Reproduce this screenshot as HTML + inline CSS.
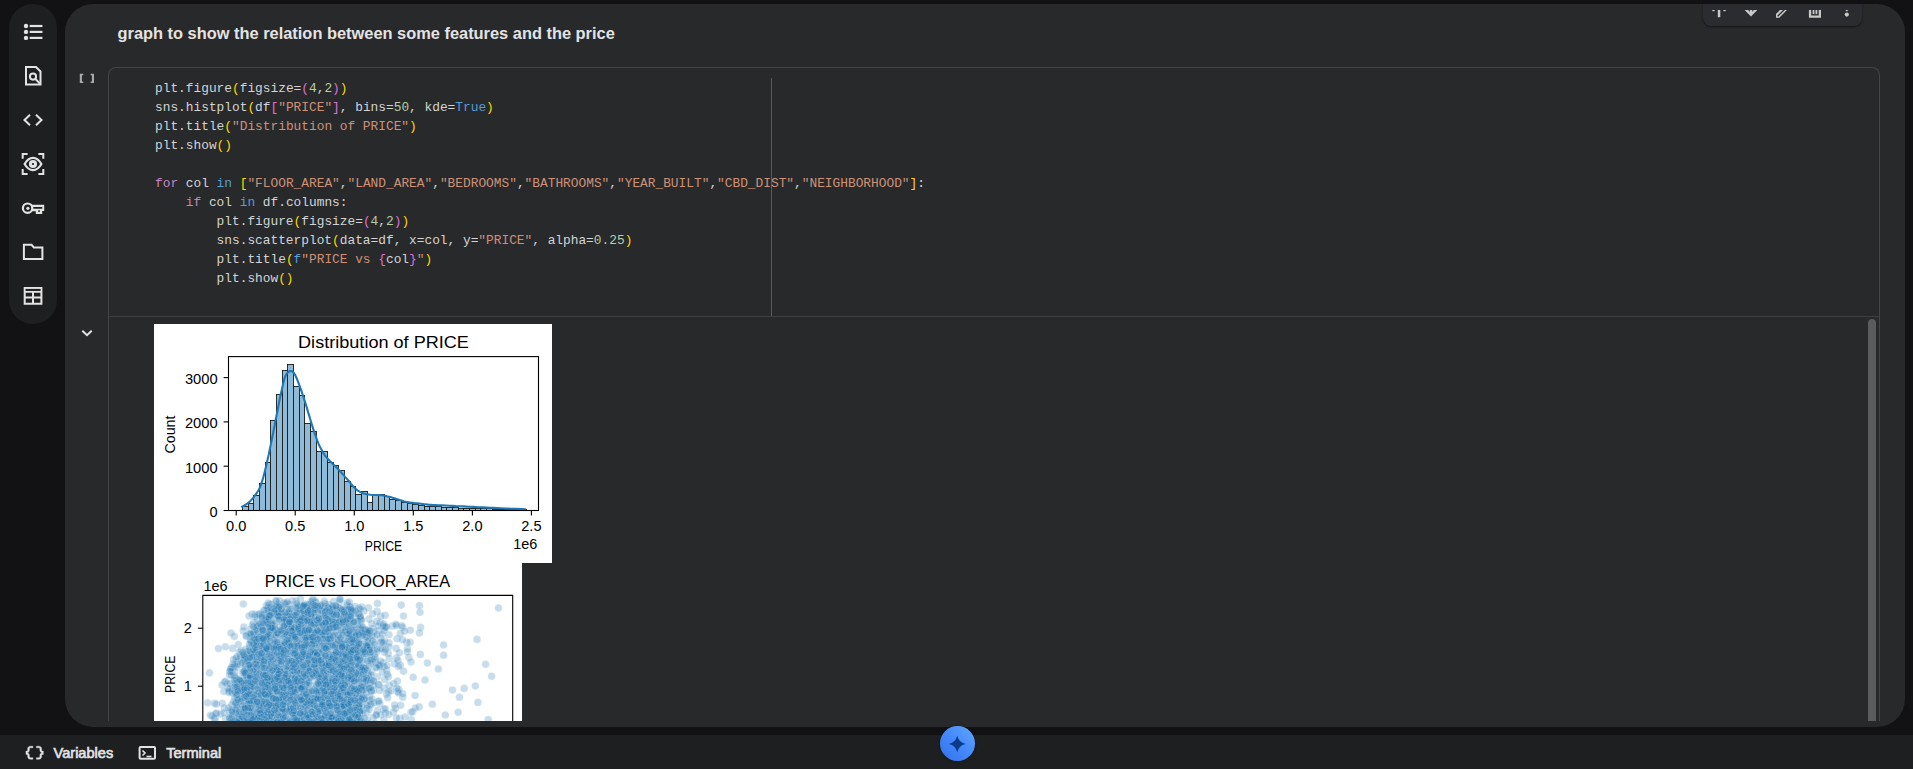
<!DOCTYPE html>
<html><head><meta charset="utf-8">
<style>
html,body{margin:0;padding:0}
body{width:1913px;height:769px;background:#121214;position:relative;overflow:hidden;font-family:"Liberation Sans",sans-serif}
.abs{position:absolute}
#side{left:9px;top:4px;width:48px;height:320px;border-radius:24px;background:#1e1f20}
#panel{left:65px;top:4px;width:1840px;height:723px;border-radius:28px;background:#28292b;overflow:hidden}
#title{left:117.5px;top:20.7px;font-weight:bold;font-size:16.4px;color:#e3e3e3;white-space:nowrap;line-height:24px}
#code{left:155px;top:79px;font-family:"Liberation Mono",monospace;font-size:12.84px;line-height:19px;color:#d4d4d4;white-space:pre}
.ln{height:19px}
.d{color:#d4d4d4} .k{color:#c586c0} .b{color:#569cd6} .s{color:#ce9178} .n{color:#b5cea8} .y{color:#ffd700} .p{color:#da70d6}
#status{left:0;top:735px;width:1913px;height:34px;background:#1e1f20}
.st{color:#e3e3e3;font-size:14.6px;white-space:nowrap;line-height:16px;-webkit-text-stroke:0.65px #e3e3e3}
</style></head><body>
<div id="side" class="abs">
<svg width="48" height="320" viewBox="9 4 48 320" style="position:absolute;left:0;top:0" fill="none" stroke="#e3e3e3" stroke-width="2">
 <g fill="#e3e3e3" stroke="none"><circle cx="26" cy="26" r="2.2"/><circle cx="26" cy="31.9" r="2.2"/><circle cx="26" cy="37.9" r="2.2"/>
 <rect x="29.7" y="24.9" width="12.7" height="2.2"/><rect x="29.7" y="30.8" width="12.7" height="2.2"/><rect x="29.7" y="36.8" width="12.7" height="2.2"/></g>
 <path d="M26,67 H36 L40.5,71.5 V84.6 H26 Z"/><circle cx="33" cy="76.6" r="3.1"/><path d="M35.2,78.8 L40,83.6"/>
 <path d="M30,114.8 L24.5,120 L30,125.2 M36,114.8 L41.5,120 L36,125.2"/>
 <path d="M22.7,158.8 V153.9 H27.6 M38.4,153.9 H43.3 V158.8 M22.7,169 V173.9 H27.6 M38.4,173.9 H43.3 V169"/>
 <path d="M24.6,164 C27.5,158.9 30.2,157.9 33,157.9 C35.8,157.9 38.5,158.9 41.4,164 C38.5,169.1 35.8,170.1 33,170.1 C30.2,170.1 27.5,169.1 24.6,164 Z" stroke-width="2.2" stroke-linejoin="round"/><circle cx="33" cy="164" r="2.6" stroke-width="3"/>
 <circle cx="27.6" cy="208.2" r="4.7" stroke-width="2.2"/><circle cx="27.9" cy="208.3" r="1.6" fill="#e3e3e3" stroke="none"/>
 <path fill="#e3e3e3" stroke="none" fill-rule="evenodd" d="M31.6,204.8 H44.2 V211.1 H42.2 V213.9 H35.8 V211.2 H31.6 Z M32.4,206.9 H42.3 V208.7 H32.4 Z M38.3,210.3 H39.8 V212 H38.3 Z"/>
 <path d="M23.9,244.8 H31.6 L33.8,247.4 H42.4 V259 H23.9 Z"/>
 <path d="M24.7,287.9 H41.4 V303.8 H24.7 Z M24.7,291.8 H41.4 M24.7,297.6 H41.4 M33,291.8 V303.8"/>
 <rect x="25.7" y="288.9" width="14.7" height="1.9" fill="#1e1f20" stroke="none"/>
</svg>
</div>
<div id="panel" class="abs"></div>
<div id="title" class="abs">graph to show the relation between some features and the price</div>
<!-- toolbar -->
<div class="abs" style="left:1703px;top:4px;width:159px;height:22px;border-radius:0 0 8px 8px;background:#2b2c2f;box-shadow:0 1px 2px rgba(0,0,0,.5)"></div>
<svg class="abs" style="left:1703px;top:0" width="160" height="26" viewBox="1703 0 160 26">
 <defs><clipPath id="tbc"><rect x="1703" y="9.9" width="160" height="20"/></clipPath></defs>
 <g clip-path="url(#tbc)" fill="#c8c8c8">
  <rect x="1717.8" y="8" width="2.5" height="9.2"/>
  <rect x="1712.3" y="8" width="2.3" height="3.2"/><rect x="1723.4" y="8" width="2.3" height="3.2"/>
  <path d="M1745,8.6 L1751,14.8 L1757,8.6" fill="none" stroke="#c8c8c8" stroke-width="2.5"/><rect x="1749.8" y="8" width="2.5" height="6"/>
  <path d="M1776,13.9 L1781.6,8.5 H1788.4 L1779.3,17.8 H1776 Z"/><path d="M1777.6,16.2 L1785.6,8.4" stroke="#2b2c2f" stroke-width="1.3"/>
  <path d="M1808.9,8 H1811.2 V15.5 H1818.7 V8 H1821 V17.8 H1808.9 Z"/><rect x="1812.6" y="8" width="1.8" height="6.1"/><rect x="1815.5" y="8" width="1.8" height="6.1"/>
  <circle cx="1846.8" cy="14.6" r="2.1"/><path d="M1844.8,9.6 H1848.8 L1846.8,11.4 Z"/>
 </g>
</svg>
<!-- cell gutter -->
<svg class="abs" style="left:70px;top:65px" width="30" height="25" viewBox="70 65 30 25" fill="#a9aaab"><path d="M79.8,73.8 H83.3 V75.3 H81.9 V81.6 H83.3 V83.1 H79.8 Z"/><path d="M94,73.8 H90.6 V75.3 H91.9 V81.6 H90.6 V83.1 H94 Z"/></svg>
<svg class="abs" style="left:80px;top:327.8px" width="14" height="10" viewBox="0 0 14 10"><path d="M2.3,2.8 L7,7.2 L11.7,2.8" fill="none" stroke="#e3e3e3" stroke-width="2"/></svg>
<!-- editor -->
<div class="abs" style="left:108px;top:67px;width:1772px;height:654px;border:1px solid #454546;border-bottom:none;border-radius:8px 8px 0 0;box-sizing:border-box"></div>
<div class="abs" style="left:109px;top:316px;width:1771px;height:1px;background:#3e3f40"></div>
<div class="abs" style="left:771px;top:78px;width:1px;height:238px;background:#5a5a5b"></div>
<div id="code" class="abs"><div class="ln"><span class="d">plt.figure</span><span class="y">(</span><span class="d">figsize=</span><span class="p">(</span><span class="n">4</span><span class="d">,</span><span class="n">2</span><span class="p">)</span><span class="y">)</span>&#8203;</div><div class="ln"><span class="d">sns.histplot</span><span class="y">(</span><span class="d">df</span><span class="p">[</span><span class="s">"PRICE"</span><span class="p">]</span><span class="d">, bins=</span><span class="n">50</span><span class="d">, kde=</span><span class="b">True</span><span class="y">)</span>&#8203;</div><div class="ln"><span class="d">plt.title</span><span class="y">(</span><span class="s">"Distribution of PRICE"</span><span class="y">)</span>&#8203;</div><div class="ln"><span class="d">plt.show</span><span class="y">()</span>&#8203;</div><div class="ln">&#8203;</div><div class="ln"><span class="k">for</span><span class="d"> col </span><span class="b">in</span><span class="d"> </span><span class="y">[</span><span class="s">"FLOOR_AREA"</span><span class="d">,</span><span class="s">"LAND_AREA"</span><span class="d">,</span><span class="s">"BEDROOMS"</span><span class="d">,</span><span class="s">"BATHROOMS"</span><span class="d">,</span><span class="s">"YEAR_BUILT"</span><span class="d">,</span><span class="s">"CBD_DIST"</span><span class="d">,</span><span class="s">"NEIGHBORHOOD"</span><span class="y">]</span><span class="d">:</span>&#8203;</div><div class="ln"><span class="d">    </span><span class="k">if</span><span class="d"> col </span><span class="b">in</span><span class="d"> df.columns:</span>&#8203;</div><div class="ln"><span class="d">        plt.figure</span><span class="y">(</span><span class="d">figsize=</span><span class="p">(</span><span class="n">4</span><span class="d">,</span><span class="n">2</span><span class="p">)</span><span class="y">)</span>&#8203;</div><div class="ln"><span class="d">        sns.scatterplot</span><span class="y">(</span><span class="d">data=df, x=col, y=</span><span class="s">"PRICE"</span><span class="d">, alpha=</span><span class="n">0.25</span><span class="y">)</span>&#8203;</div><div class="ln"><span class="d">        plt.title</span><span class="y">(</span><span class="b">f</span><span class="s">"PRICE vs </span><span class="p">{</span><span class="d">col</span><span class="p">}</span><span class="s">"</span><span class="y">)</span>&#8203;</div><div class="ln"><span class="d">        plt.show</span><span class="y">()</span>&#8203;</div></div>
<!-- outputs -->
<svg width="398" height="239" viewBox="0 0 398 239" style="position:absolute;left:154px;top:324px;background:#fff">
<g fill="#8fbbd9" stroke="#1a1a1a" stroke-width="0.9"><rect x="88.5" y="182.5" width="6" height="4.0"/><rect x="94.5" y="179.5" width="5" height="7.0"/><rect x="99.5" y="171.5" width="6" height="15.0"/><rect x="105.5" y="159.5" width="6" height="27.0"/><rect x="111.5" y="138.5" width="5" height="48.0"/><rect x="116.5" y="96.5" width="6" height="90.0"/><rect x="122.5" y="70.5" width="6" height="116.0"/><rect x="128.5" y="46.5" width="5" height="140.0"/><rect x="133.5" y="40.5" width="6" height="146.0"/><rect x="139.5" y="62.5" width="6" height="124.0"/><rect x="145.5" y="71.5" width="5" height="115.0"/><rect x="150.5" y="99.5" width="6" height="87.0"/><rect x="156.5" y="107.5" width="6" height="79.0"/><rect x="162.5" y="127.5" width="5" height="59.0"/><rect x="167.5" y="127.5" width="6" height="59.0"/><rect x="173.5" y="138.5" width="6" height="48.0"/><rect x="179.5" y="141.5" width="5" height="45.0"/><rect x="184.5" y="146.5" width="6" height="40.0"/><rect x="190.5" y="157.5" width="6" height="29.0"/><rect x="196.5" y="162.5" width="5" height="24.0"/><rect x="201.5" y="170.5" width="6" height="16.0"/><rect x="207.5" y="167.5" width="6" height="19.0"/><rect x="213.5" y="178.5" width="5" height="8.0"/><rect x="218.5" y="171.5" width="6" height="15.0"/><rect x="224.5" y="170.5" width="6" height="16.0"/><rect x="230.5" y="172.5" width="5" height="14.0"/><rect x="235.5" y="175.5" width="6" height="11.0"/><rect x="241.5" y="176.5" width="6" height="10.0"/><rect x="247.5" y="178.5" width="6" height="8.0"/><rect x="253.5" y="179.5" width="5" height="7.0"/><rect x="258.5" y="180.5" width="6" height="6.0"/><rect x="264.5" y="181.5" width="6" height="5.0"/><rect x="270.5" y="182.5" width="5" height="4.0"/><rect x="275.5" y="182.5" width="6" height="4.0"/><rect x="281.5" y="182.5" width="6" height="4.0"/><rect x="287.5" y="183.5" width="5" height="3.0"/><rect x="292.5" y="183.5" width="6" height="3.0"/><rect x="298.5" y="183.5" width="6" height="3.0"/><rect x="304.5" y="184.5" width="5" height="2.0"/><rect x="309.5" y="184.5" width="6" height="2.0"/><rect x="315.5" y="184.5" width="6" height="2.0"/><rect x="321.5" y="184.5" width="5" height="2.0"/><rect x="326.5" y="184.5" width="6" height="2.0"/><rect x="332.5" y="184.5" width="6" height="2.0"/><rect x="338.5" y="185.5" width="5" height="1.0"/><rect x="343.5" y="185.5" width="6" height="1.0"/><rect x="349.5" y="185.5" width="6" height="1.0"/><rect x="355.5" y="185.5" width="5" height="1.0"/><rect x="360.5" y="185.5" width="6" height="1.0"/><rect x="366.5" y="185.5" width="6" height="1.0"/></g>
<path d="M88.1,182.6 L89.0,182.1 L90.3,181.5 L91.7,180.7 L93.3,179.7 L94.7,178.6 L96.1,177.3 L97.4,175.9 L98.8,174.3 L100.1,172.6 L101.4,170.8 L102.6,169.1 L103.7,167.5 L104.8,165.7 L105.8,163.6 L106.9,160.9 L108.0,157.7 L109.1,154.0 L110.2,149.9 L111.3,145.6 L112.4,141.0 L113.5,136.1 L114.7,130.7 L115.8,125.1 L117.0,119.6 L118.0,114.5 L119.0,109.8 L119.8,105.3 L120.7,101.0 L121.5,96.7 L122.4,92.3 L123.3,87.8 L124.2,83.2 L125.0,78.7 L125.9,74.3 L126.8,70.2 L127.7,66.2 L128.6,62.2 L129.4,58.5 L130.3,55.2 L131.2,52.5 L132.1,50.6 L133.0,49.2 L133.9,48.3 L134.8,47.7 L135.6,47.3 L136.4,47.0 L137.2,47.1 L138.0,47.3 L138.7,47.8 L139.5,48.6 L140.2,49.5 L140.9,50.6 L141.6,51.9 L142.4,53.7 L143.4,56.0 L144.5,58.9 L145.8,62.5 L147.2,66.4 L148.6,70.5 L150.0,74.6 L151.3,78.8 L152.7,83.3 L154.0,87.9 L155.4,92.4 L156.7,96.8 L158.0,101.0 L159.3,105.2 L160.7,109.3 L162.0,113.2 L163.3,116.7 L164.6,119.9 L165.9,122.7 L167.3,125.3 L168.6,127.7 L169.9,129.9 L171.2,131.8 L172.5,133.4 L173.8,134.8 L175.1,136.2 L176.6,137.7 L178.2,139.4 L180.0,141.1 L181.8,142.8 L183.6,144.6 L185.4,146.5 L187.2,148.5 L189.1,150.5 L190.9,152.6 L192.7,154.6 L194.3,156.5 L195.8,158.2 L197.1,159.9 L198.4,161.5 L199.6,162.9 L200.9,164.2 L202.2,165.3 L203.4,166.3 L204.7,167.2 L206.0,167.9 L207.5,168.6 L209.1,169.2 L210.8,169.7 L212.6,170.2 L214.4,170.5 L216.4,170.8 L218.5,171.0 L220.7,171.0 L223.1,171.0 L225.3,171.1 L227.4,171.2 L229.3,171.5 L231.2,171.8 L233.0,172.3 L234.7,172.7 L236.3,173.1 L237.8,173.5 L239.2,173.9 L240.5,174.3 L241.8,174.7 L243.3,175.2 L244.9,175.7 L246.6,176.3 L248.4,176.8 L250.2,177.4 L251.9,177.8 L253.5,178.1 L254.9,178.4 L256.4,178.6 L258.2,178.8 L260.5,179.1 L263.4,179.4 L266.8,179.8 L270.5,180.2 L274.2,180.6 L277.8,180.9 L281.2,181.1 L284.7,181.3 L288.1,181.4 L291.6,181.5 L295.0,181.7 L298.5,181.9 L301.9,182.1 L305.4,182.2 L308.8,182.4 L312.3,182.6 L315.7,182.8 L319.2,182.9 L322.6,183.1 L326.1,183.2 L329.5,183.4 L332.8,183.6 L336.0,183.8 L339.3,183.9 L342.8,184.1 L346.7,184.3 L351.5,184.5 L357.0,184.7 L362.6,184.9 L367.5,185.1 L370.9,185.2" fill="none" stroke="#1f77b4" stroke-width="2.1" stroke-linejoin="round" stroke-linecap="square"/>
<rect x="74.5" y="32.6" width="310.0" height="153.9" fill="none" stroke="#000" stroke-width="1.1"/>
<g font-family="Liberation Sans, sans-serif" fill="#000"><path d="M82.2,186.5v4.9" stroke="#000" stroke-width="1.1"/><text x="82.2" y="207.2" text-anchor="middle" font-size="13.9" textLength="20.3" lengthAdjust="spacingAndGlyphs">0.0</text><path d="M141.2,186.5v4.9" stroke="#000" stroke-width="1.1"/><text x="141.2" y="207.2" text-anchor="middle" font-size="13.9" textLength="20.3" lengthAdjust="spacingAndGlyphs">0.5</text><path d="M200.3,186.5v4.9" stroke="#000" stroke-width="1.1"/><text x="200.3" y="207.2" text-anchor="middle" font-size="13.9" textLength="20.3" lengthAdjust="spacingAndGlyphs">1.0</text><path d="M259.3,186.5v4.9" stroke="#000" stroke-width="1.1"/><text x="259.3" y="207.2" text-anchor="middle" font-size="13.9" textLength="20.3" lengthAdjust="spacingAndGlyphs">1.5</text><path d="M318.4,186.5v4.9" stroke="#000" stroke-width="1.1"/><text x="318.4" y="207.2" text-anchor="middle" font-size="13.9" textLength="20.3" lengthAdjust="spacingAndGlyphs">2.0</text><path d="M377.4,186.5v4.9" stroke="#000" stroke-width="1.1"/><text x="377.4" y="207.2" text-anchor="middle" font-size="13.9" textLength="20.3" lengthAdjust="spacingAndGlyphs">2.5</text><path d="M74.5,186.5h-4.9" stroke="#000" stroke-width="1.1"/><text x="63.6" y="193.0" text-anchor="end" font-size="13.9" textLength="8.1" lengthAdjust="spacingAndGlyphs">0</text><path d="M74.5,142.2h-4.9" stroke="#000" stroke-width="1.1"/><text x="63.6" y="148.7" text-anchor="end" font-size="13.9" textLength="32.7" lengthAdjust="spacingAndGlyphs">1000</text><path d="M74.5,97.9h-4.9" stroke="#000" stroke-width="1.1"/><text x="63.6" y="104.4" text-anchor="end" font-size="13.9" textLength="32.7" lengthAdjust="spacingAndGlyphs">2000</text><path d="M74.5,53.6h-4.9" stroke="#000" stroke-width="1.1"/><text x="63.6" y="60.1" text-anchor="end" font-size="13.9" textLength="32.7" lengthAdjust="spacingAndGlyphs">3000</text><text x="229.5" y="23.6" text-anchor="middle" font-size="17.4" textLength="170.9" lengthAdjust="spacingAndGlyphs">Distribution of PRICE</text><text x="229.5" y="227.2" text-anchor="middle" font-size="13.9" textLength="37.3" lengthAdjust="spacingAndGlyphs">PRICE</text><text x="383.4" y="224.5" text-anchor="end" font-size="13.9" textLength="24.1" lengthAdjust="spacingAndGlyphs">1e6</text><g transform="translate(21.30000000000001,110.5) rotate(-90)"><text x="0.0" y="0.0" text-anchor="middle" font-size="13.9" textLength="38.0" lengthAdjust="spacingAndGlyphs">Count</text></g></g>
</svg>
<svg width="368" height="158" viewBox="0 0 368 158" style="position:absolute;left:154px;top:563px;background:#fff">
<style>.sc circle{r:3.8px}</style><g class="sc" fill="rgba(31,119,180,0.25)" stroke="rgba(255,255,255,0.25)" stroke-width="0.7"><circle cx="160.8" cy="51.6"/><circle cx="132.2" cy="113.5"/><circle cx="111.6" cy="118.7"/><circle cx="198.5" cy="134.4"/><circle cx="171.8" cy="138.0"/><circle cx="172.8" cy="61.2"/><circle cx="181.2" cy="79.8"/><circle cx="112.0" cy="94.1"/><circle cx="145.6" cy="147.9"/><circle cx="125.7" cy="123.0"/><circle cx="180.3" cy="141.7"/><circle cx="159.5" cy="126.8"/><circle cx="120.3" cy="62.8"/><circle cx="120.2" cy="90.2"/><circle cx="196.5" cy="104.0"/><circle cx="130.1" cy="39.9"/><circle cx="82.7" cy="160.8"/><circle cx="185.4" cy="45.4"/><circle cx="122.5" cy="115.4"/><circle cx="205.1" cy="149.4"/><circle cx="201.3" cy="136.7"/><circle cx="136.9" cy="52.8"/><circle cx="184.3" cy="71.4"/><circle cx="188.0" cy="65.6"/><circle cx="114.9" cy="127.7"/><circle cx="172.7" cy="87.6"/><circle cx="122.5" cy="47.6"/><circle cx="191.1" cy="133.9"/><circle cx="116.7" cy="130.3"/><circle cx="216.0" cy="78.2"/><circle cx="174.1" cy="129.0"/><circle cx="175.5" cy="91.7"/><circle cx="187.3" cy="46.9"/><circle cx="142.0" cy="112.9"/><circle cx="88.7" cy="143.7"/><circle cx="143.1" cy="50.6"/><circle cx="170.1" cy="125.1"/><circle cx="140.2" cy="90.2"/><circle cx="162.7" cy="81.0"/><circle cx="185.2" cy="128.3"/><circle cx="140.5" cy="152.1"/><circle cx="149.6" cy="150.4"/><circle cx="199.1" cy="110.0"/><circle cx="203.1" cy="76.3"/><circle cx="124.0" cy="96.8"/><circle cx="138.8" cy="110.1"/><circle cx="138.4" cy="101.2"/><circle cx="131.1" cy="90.2"/><circle cx="100.8" cy="110.6"/><circle cx="133.4" cy="51.5"/><circle cx="178.2" cy="58.6"/><circle cx="120.8" cy="83.8"/><circle cx="148.2" cy="117.9"/><circle cx="147.5" cy="121.8"/><circle cx="140.2" cy="121.2"/><circle cx="111.4" cy="139.4"/><circle cx="179.7" cy="73.9"/><circle cx="110.6" cy="70.7"/><circle cx="116.1" cy="146.3"/><circle cx="177.8" cy="122.8"/><circle cx="126.5" cy="83.8"/><circle cx="136.2" cy="141.8"/><circle cx="137.8" cy="151.8"/><circle cx="150.2" cy="47.1"/><circle cx="189.4" cy="113.0"/><circle cx="172.8" cy="140.1"/><circle cx="166.5" cy="58.9"/><circle cx="184.8" cy="116.1"/><circle cx="161.9" cy="76.3"/><circle cx="152.5" cy="147.3"/><circle cx="176.0" cy="132.4"/><circle cx="149.6" cy="126.2"/><circle cx="86.0" cy="156.5"/><circle cx="130.5" cy="64.2"/><circle cx="188.7" cy="80.8"/><circle cx="118.9" cy="63.5"/><circle cx="124.2" cy="107.7"/><circle cx="53.7" cy="139.8"/><circle cx="104.4" cy="151.0"/><circle cx="149.7" cy="158.6"/><circle cx="181.6" cy="102.0"/><circle cx="229.2" cy="99.7"/><circle cx="187.4" cy="124.8"/><circle cx="202.0" cy="155.3"/><circle cx="149.6" cy="49.0"/><circle cx="187.3" cy="94.3"/><circle cx="114.4" cy="146.0"/><circle cx="161.2" cy="74.7"/><circle cx="191.0" cy="153.6"/><circle cx="148.5" cy="56.5"/><circle cx="76.3" cy="154.3"/><circle cx="99.5" cy="59.6"/><circle cx="193.5" cy="95.7"/><circle cx="95.7" cy="125.4"/><circle cx="146.9" cy="44.0"/><circle cx="176.0" cy="121.6"/><circle cx="75.9" cy="148.7"/><circle cx="180.2" cy="158.2"/><circle cx="130.0" cy="73.9"/><circle cx="114.4" cy="129.9"/><circle cx="169.9" cy="49.3"/><circle cx="140.7" cy="95.9"/><circle cx="206.6" cy="127.1"/><circle cx="123.3" cy="144.2"/><circle cx="149.5" cy="55.5"/><circle cx="136.8" cy="111.5"/><circle cx="146.7" cy="112.3"/><circle cx="133.6" cy="63.0"/><circle cx="210.9" cy="120.0"/><circle cx="220.1" cy="73.3"/><circle cx="124.2" cy="106.4"/><circle cx="178.6" cy="115.2"/><circle cx="143.1" cy="45.5"/><circle cx="113.0" cy="131.3"/><circle cx="114.2" cy="64.8"/><circle cx="149.8" cy="44.9"/><circle cx="178.2" cy="107.0"/><circle cx="112.0" cy="145.9"/><circle cx="102.1" cy="159.9"/><circle cx="164.0" cy="107.9"/><circle cx="125.1" cy="104.6"/><circle cx="156.4" cy="46.0"/><circle cx="176.0" cy="62.3"/><circle cx="116.3" cy="51.2"/><circle cx="150.4" cy="91.7"/><circle cx="101.6" cy="154.4"/><circle cx="182.1" cy="63.4"/><circle cx="155.4" cy="75.5"/><circle cx="202.5" cy="110.6"/><circle cx="142.2" cy="111.7"/><circle cx="182.3" cy="47.8"/><circle cx="202.4" cy="100.4"/><circle cx="137.6" cy="112.5"/><circle cx="133.2" cy="135.7"/><circle cx="144.1" cy="127.1"/><circle cx="140.5" cy="116.8"/><circle cx="148.9" cy="114.7"/><circle cx="165.6" cy="69.3"/><circle cx="200.6" cy="130.5"/><circle cx="121.6" cy="157.0"/><circle cx="198.5" cy="157.0"/><circle cx="117.0" cy="148.7"/><circle cx="123.3" cy="69.3"/><circle cx="172.2" cy="55.6"/><circle cx="201.0" cy="128.5"/><circle cx="194.0" cy="86.9"/><circle cx="126.1" cy="127.5"/><circle cx="135.7" cy="51.0"/><circle cx="101.2" cy="99.4"/><circle cx="229.8" cy="146.2"/><circle cx="126.7" cy="96.8"/><circle cx="129.2" cy="141.3"/><circle cx="170.7" cy="121.5"/><circle cx="174.8" cy="60.3"/><circle cx="200.4" cy="96.4"/><circle cx="209.6" cy="136.3"/><circle cx="113.7" cy="132.0"/><circle cx="122.3" cy="50.7"/><circle cx="129.6" cy="122.1"/><circle cx="200.3" cy="116.6"/><circle cx="129.0" cy="129.8"/><circle cx="77.9" cy="141.6"/><circle cx="234.4" cy="90.2"/><circle cx="178.9" cy="42.8"/><circle cx="102.4" cy="139.0"/><circle cx="117.6" cy="159.7"/><circle cx="142.1" cy="122.2"/><circle cx="153.4" cy="67.7"/><circle cx="162.3" cy="84.7"/><circle cx="174.4" cy="142.4"/><circle cx="89.0" cy="156.2"/><circle cx="109.5" cy="149.5"/><circle cx="126.4" cy="83.9"/><circle cx="114.9" cy="142.3"/><circle cx="177.8" cy="79.5"/><circle cx="225.9" cy="140.8"/><circle cx="210.9" cy="105.8"/><circle cx="147.0" cy="42.7"/><circle cx="186.4" cy="111.2"/><circle cx="186.2" cy="117.2"/><circle cx="179.4" cy="117.7"/><circle cx="155.6" cy="87.8"/><circle cx="106.2" cy="154.0"/><circle cx="195.0" cy="150.5"/><circle cx="143.0" cy="149.4"/><circle cx="132.5" cy="95.0"/><circle cx="194.4" cy="136.2"/><circle cx="82.2" cy="117.4"/><circle cx="187.9" cy="134.8"/><circle cx="118.2" cy="65.3"/><circle cx="144.4" cy="122.1"/><circle cx="207.5" cy="142.8"/><circle cx="172.2" cy="43.5"/><circle cx="119.1" cy="53.6"/><circle cx="195.6" cy="146.5"/><circle cx="112.4" cy="158.1"/><circle cx="182.2" cy="53.4"/><circle cx="113.9" cy="131.3"/><circle cx="177.5" cy="116.8"/><circle cx="129.1" cy="140.2"/><circle cx="149.6" cy="95.1"/><circle cx="143.1" cy="100.3"/><circle cx="115.2" cy="117.0"/><circle cx="190.6" cy="140.0"/><circle cx="152.8" cy="119.8"/><circle cx="162.3" cy="71.7"/><circle cx="170.2" cy="85.0"/><circle cx="172.6" cy="97.6"/><circle cx="169.4" cy="154.4"/><circle cx="88.0" cy="158.8"/><circle cx="107.7" cy="96.0"/><circle cx="132.6" cy="95.9"/><circle cx="180.0" cy="56.3"/><circle cx="107.6" cy="113.3"/><circle cx="126.6" cy="149.6"/><circle cx="154.7" cy="130.6"/><circle cx="140.7" cy="149.4"/><circle cx="151.6" cy="115.6"/><circle cx="151.1" cy="140.0"/><circle cx="212.0" cy="117.5"/><circle cx="136.3" cy="159.6"/><circle cx="149.2" cy="70.6"/><circle cx="145.2" cy="153.0"/><circle cx="213.0" cy="150.2"/><circle cx="125.3" cy="88.1"/><circle cx="102.2" cy="129.2"/><circle cx="214.4" cy="44.9"/><circle cx="114.7" cy="150.8"/><circle cx="207.5" cy="57.8"/><circle cx="185.4" cy="91.4"/><circle cx="121.9" cy="160.5"/><circle cx="210.7" cy="66.8"/><circle cx="115.9" cy="116.6"/><circle cx="147.0" cy="96.2"/><circle cx="178.6" cy="153.4"/><circle cx="115.3" cy="124.5"/><circle cx="153.1" cy="71.8"/><circle cx="175.9" cy="150.5"/><circle cx="160.2" cy="144.1"/><circle cx="78.3" cy="125.4"/><circle cx="195.1" cy="110.3"/><circle cx="123.5" cy="92.1"/><circle cx="209.4" cy="100.4"/><circle cx="239.4" cy="149.1"/><circle cx="133.2" cy="119.3"/><circle cx="186.5" cy="122.8"/><circle cx="159.7" cy="60.4"/><circle cx="138.9" cy="83.5"/><circle cx="149.3" cy="135.6"/><circle cx="184.8" cy="78.5"/><circle cx="163.2" cy="138.9"/><circle cx="206.7" cy="55.9"/><circle cx="189.8" cy="112.8"/><circle cx="134.0" cy="109.5"/><circle cx="113.2" cy="79.8"/><circle cx="177.2" cy="138.8"/><circle cx="153.3" cy="77.0"/><circle cx="168.9" cy="104.0"/><circle cx="150.6" cy="112.0"/><circle cx="148.6" cy="48.2"/><circle cx="137.7" cy="138.7"/><circle cx="138.6" cy="85.8"/><circle cx="125.9" cy="108.1"/><circle cx="132.5" cy="59.6"/><circle cx="154.0" cy="45.9"/><circle cx="146.3" cy="149.7"/><circle cx="89.5" cy="120.8"/><circle cx="86.8" cy="91.9"/><circle cx="140.0" cy="118.4"/><circle cx="142.4" cy="124.3"/><circle cx="88.9" cy="128.1"/><circle cx="99.8" cy="138.2"/><circle cx="79.4" cy="138.8"/><circle cx="140.7" cy="75.7"/><circle cx="209.6" cy="71.3"/><circle cx="123.6" cy="99.1"/><circle cx="151.4" cy="75.3"/><circle cx="198.7" cy="116.4"/><circle cx="126.6" cy="160.0"/><circle cx="98.5" cy="133.3"/><circle cx="87.4" cy="150.3"/><circle cx="176.5" cy="159.2"/><circle cx="153.7" cy="55.1"/><circle cx="98.6" cy="92.4"/><circle cx="78.5" cy="152.8"/><circle cx="165.9" cy="142.7"/><circle cx="116.2" cy="87.4"/><circle cx="150.8" cy="70.0"/><circle cx="89.4" cy="139.8"/><circle cx="199.4" cy="113.7"/><circle cx="144.8" cy="50.2"/><circle cx="145.5" cy="79.1"/><circle cx="176.7" cy="58.7"/><circle cx="187.1" cy="153.0"/><circle cx="159.0" cy="143.3"/><circle cx="192.9" cy="52.8"/><circle cx="217.5" cy="95.8"/><circle cx="114.2" cy="104.9"/><circle cx="124.5" cy="44.1"/><circle cx="126.9" cy="107.1"/><circle cx="167.3" cy="56.3"/><circle cx="141.6" cy="134.4"/><circle cx="200.2" cy="106.1"/><circle cx="152.9" cy="156.4"/><circle cx="165.2" cy="62.0"/><circle cx="232.7" cy="107.0"/><circle cx="160.3" cy="66.0"/><circle cx="177.5" cy="53.5"/><circle cx="176.5" cy="148.9"/><circle cx="200.0" cy="49.9"/><circle cx="168.5" cy="71.3"/><circle cx="181.1" cy="54.3"/><circle cx="167.9" cy="157.0"/><circle cx="197.0" cy="107.5"/><circle cx="189.6" cy="90.9"/><circle cx="99.2" cy="72.7"/><circle cx="235.1" cy="122.2"/><circle cx="149.6" cy="96.2"/><circle cx="90.1" cy="107.4"/><circle cx="121.7" cy="150.4"/><circle cx="102.2" cy="128.5"/><circle cx="96.1" cy="130.9"/><circle cx="158.9" cy="100.1"/><circle cx="94.7" cy="125.5"/><circle cx="94.5" cy="148.2"/><circle cx="207.6" cy="98.1"/><circle cx="99.9" cy="117.0"/><circle cx="152.6" cy="45.2"/><circle cx="176.6" cy="121.9"/><circle cx="125.8" cy="55.9"/><circle cx="164.3" cy="80.0"/><circle cx="139.0" cy="65.9"/><circle cx="147.2" cy="106.6"/><circle cx="138.0" cy="64.4"/><circle cx="168.1" cy="131.3"/><circle cx="128.9" cy="67.4"/><circle cx="189.9" cy="153.8"/><circle cx="208.8" cy="87.5"/><circle cx="86.9" cy="101.2"/><circle cx="126.1" cy="158.8"/><circle cx="199.5" cy="133.6"/><circle cx="95.8" cy="136.9"/><circle cx="134.1" cy="58.7"/><circle cx="182.2" cy="144.6"/><circle cx="197.2" cy="87.5"/><circle cx="124.0" cy="79.4"/><circle cx="190.2" cy="94.1"/><circle cx="124.4" cy="124.0"/><circle cx="168.1" cy="77.3"/><circle cx="134.8" cy="106.0"/><circle cx="188.9" cy="100.1"/><circle cx="172.4" cy="135.0"/><circle cx="138.7" cy="150.4"/><circle cx="171.6" cy="72.8"/><circle cx="123.4" cy="69.8"/><circle cx="150.1" cy="130.9"/><circle cx="101.6" cy="108.9"/><circle cx="186.5" cy="106.7"/><circle cx="205.6" cy="102.2"/><circle cx="156.1" cy="70.2"/><circle cx="140.4" cy="68.1"/><circle cx="113.0" cy="156.3"/><circle cx="174.8" cy="138.3"/><circle cx="131.7" cy="123.3"/><circle cx="115.5" cy="151.4"/><circle cx="134.6" cy="103.1"/><circle cx="117.5" cy="88.9"/><circle cx="223.0" cy="48.4"/><circle cx="151.4" cy="42.2"/><circle cx="170.5" cy="148.6"/><circle cx="199.4" cy="128.8"/><circle cx="82.1" cy="146.1"/><circle cx="164.3" cy="153.7"/><circle cx="170.0" cy="145.4"/><circle cx="158.9" cy="35.8"/><circle cx="117.3" cy="62.2"/><circle cx="163.7" cy="132.3"/><circle cx="77.2" cy="155.0"/><circle cx="193.8" cy="55.6"/><circle cx="205.5" cy="64.3"/><circle cx="143.9" cy="76.4"/><circle cx="94.5" cy="136.2"/><circle cx="113.5" cy="152.8"/><circle cx="222.7" cy="58.3"/><circle cx="214.1" cy="88.1"/><circle cx="168.9" cy="139.6"/><circle cx="178.5" cy="115.3"/><circle cx="100.9" cy="80.7"/><circle cx="154.7" cy="141.9"/><circle cx="167.2" cy="136.4"/><circle cx="105.5" cy="147.2"/><circle cx="97.3" cy="141.9"/><circle cx="146.1" cy="58.7"/><circle cx="148.8" cy="43.2"/><circle cx="157.9" cy="41.1"/><circle cx="158.3" cy="149.8"/><circle cx="70.3" cy="145.1"/><circle cx="177.0" cy="120.5"/><circle cx="219.8" cy="68.8"/><circle cx="131.9" cy="113.7"/><circle cx="107.4" cy="110.7"/><circle cx="116.9" cy="51.3"/><circle cx="135.1" cy="106.4"/><circle cx="90.0" cy="97.3"/><circle cx="98.5" cy="99.1"/><circle cx="201.0" cy="43.5"/><circle cx="197.9" cy="117.4"/><circle cx="115.0" cy="88.9"/><circle cx="227.0" cy="79.5"/><circle cx="97.7" cy="118.9"/><circle cx="184.2" cy="147.5"/><circle cx="197.3" cy="92.7"/><circle cx="166.5" cy="42.8"/><circle cx="200.4" cy="135.5"/><circle cx="206.8" cy="66.5"/><circle cx="125.6" cy="37.8"/><circle cx="113.8" cy="122.7"/><circle cx="121.4" cy="50.1"/><circle cx="243.0" cy="75.8"/><circle cx="123.1" cy="51.6"/><circle cx="135.5" cy="50.5"/><circle cx="153.1" cy="106.9"/><circle cx="162.8" cy="94.3"/><circle cx="168.0" cy="122.1"/><circle cx="88.3" cy="109.6"/><circle cx="107.2" cy="115.9"/><circle cx="164.4" cy="78.2"/><circle cx="89.6" cy="109.4"/><circle cx="117.3" cy="144.5"/><circle cx="101.9" cy="147.0"/><circle cx="199.6" cy="82.9"/><circle cx="221.6" cy="99.2"/><circle cx="173.4" cy="95.3"/><circle cx="179.8" cy="58.4"/><circle cx="85.2" cy="89.1"/><circle cx="182.6" cy="146.4"/><circle cx="169.1" cy="124.4"/><circle cx="190.5" cy="98.2"/><circle cx="171.9" cy="68.0"/><circle cx="149.8" cy="130.9"/><circle cx="181.1" cy="116.6"/><circle cx="102.7" cy="74.3"/><circle cx="178.9" cy="117.6"/><circle cx="142.6" cy="156.6"/><circle cx="77.4" cy="146.9"/><circle cx="183.1" cy="122.5"/><circle cx="215.1" cy="88.9"/><circle cx="181.3" cy="58.8"/><circle cx="56.4" cy="152.3"/><circle cx="130.4" cy="57.8"/><circle cx="196.4" cy="92.8"/><circle cx="159.4" cy="103.4"/><circle cx="189.9" cy="113.8"/><circle cx="219.1" cy="65.5"/><circle cx="125.7" cy="67.8"/><circle cx="129.4" cy="138.2"/><circle cx="195.2" cy="155.9"/><circle cx="133.5" cy="101.2"/><circle cx="90.5" cy="95.5"/><circle cx="119.0" cy="55.4"/><circle cx="117.4" cy="114.1"/><circle cx="128.3" cy="144.6"/><circle cx="207.1" cy="131.7"/><circle cx="87.2" cy="159.7"/><circle cx="137.7" cy="108.2"/><circle cx="128.1" cy="50.7"/><circle cx="167.1" cy="121.0"/><circle cx="135.4" cy="71.7"/><circle cx="158.5" cy="153.6"/><circle cx="162.6" cy="111.2"/><circle cx="107.3" cy="63.8"/><circle cx="214.9" cy="56.1"/><circle cx="198.0" cy="97.7"/><circle cx="182.5" cy="113.5"/><circle cx="170.3" cy="132.1"/><circle cx="140.4" cy="103.0"/><circle cx="140.4" cy="56.2"/><circle cx="86.1" cy="118.5"/><circle cx="196.0" cy="43.8"/><circle cx="197.0" cy="153.9"/><circle cx="212.1" cy="117.2"/><circle cx="222.9" cy="88.8"/><circle cx="137.9" cy="105.7"/><circle cx="91.4" cy="133.0"/><circle cx="176.3" cy="75.4"/><circle cx="177.5" cy="153.6"/><circle cx="101.3" cy="146.8"/><circle cx="134.5" cy="111.1"/><circle cx="179.1" cy="78.8"/><circle cx="149.7" cy="85.8"/><circle cx="131.5" cy="55.8"/><circle cx="169.8" cy="109.2"/><circle cx="188.8" cy="69.2"/><circle cx="114.7" cy="142.0"/><circle cx="168.9" cy="143.5"/><circle cx="114.1" cy="133.1"/><circle cx="115.3" cy="117.8"/><circle cx="88.4" cy="122.1"/><circle cx="175.9" cy="118.6"/><circle cx="152.2" cy="117.8"/><circle cx="187.6" cy="99.7"/><circle cx="132.5" cy="154.2"/><circle cx="75.6" cy="126.7"/><circle cx="154.2" cy="71.8"/><circle cx="119.4" cy="135.4"/><circle cx="100.6" cy="88.4"/><circle cx="104.1" cy="138.3"/><circle cx="176.3" cy="103.3"/><circle cx="135.0" cy="133.0"/><circle cx="116.2" cy="104.4"/><circle cx="158.7" cy="83.5"/><circle cx="129.4" cy="150.5"/><circle cx="202.5" cy="74.3"/><circle cx="248.7" cy="64.3"/><circle cx="146.2" cy="57.2"/><circle cx="80.7" cy="115.5"/><circle cx="104.3" cy="83.3"/><circle cx="242.1" cy="85.4"/><circle cx="154.7" cy="137.2"/><circle cx="157.1" cy="77.2"/><circle cx="138.7" cy="116.5"/><circle cx="151.6" cy="131.6"/><circle cx="137.8" cy="73.4"/><circle cx="153.4" cy="56.8"/><circle cx="140.7" cy="65.6"/><circle cx="163.6" cy="134.8"/><circle cx="151.0" cy="58.1"/><circle cx="172.7" cy="86.7"/><circle cx="114.1" cy="56.7"/><circle cx="174.8" cy="41.5"/><circle cx="195.8" cy="104.8"/><circle cx="126.1" cy="139.2"/><circle cx="193.3" cy="60.1"/><circle cx="162.4" cy="72.4"/><circle cx="195.8" cy="91.0"/><circle cx="203.6" cy="85.0"/><circle cx="106.1" cy="126.5"/><circle cx="143.7" cy="44.5"/><circle cx="131.8" cy="115.1"/><circle cx="124.1" cy="159.8"/><circle cx="139.9" cy="108.3"/><circle cx="173.1" cy="110.0"/><circle cx="162.1" cy="97.2"/><circle cx="90.8" cy="159.3"/><circle cx="131.2" cy="120.8"/><circle cx="185.7" cy="112.7"/><circle cx="95.2" cy="71.3"/><circle cx="110.1" cy="133.7"/><circle cx="199.1" cy="89.4"/><circle cx="116.6" cy="98.1"/><circle cx="171.3" cy="73.5"/><circle cx="164.6" cy="56.2"/><circle cx="75.8" cy="158.5"/><circle cx="200.9" cy="72.8"/><circle cx="196.8" cy="144.6"/><circle cx="208.5" cy="108.2"/><circle cx="135.6" cy="143.5"/><circle cx="163.9" cy="110.3"/><circle cx="180.7" cy="123.8"/><circle cx="123.8" cy="124.5"/><circle cx="192.1" cy="132.0"/><circle cx="173.9" cy="125.8"/><circle cx="200.0" cy="66.9"/><circle cx="132.8" cy="57.1"/><circle cx="149.3" cy="87.1"/><circle cx="124.7" cy="137.0"/><circle cx="190.8" cy="126.7"/><circle cx="156.4" cy="74.4"/><circle cx="181.7" cy="67.6"/><circle cx="94.9" cy="124.9"/><circle cx="145.4" cy="156.7"/><circle cx="110.9" cy="88.9"/><circle cx="113.0" cy="84.1"/><circle cx="74.9" cy="129.5"/><circle cx="196.1" cy="97.9"/><circle cx="158.5" cy="79.0"/><circle cx="176.2" cy="93.6"/><circle cx="209.9" cy="78.2"/><circle cx="193.3" cy="149.5"/><circle cx="155.3" cy="71.7"/><circle cx="144.6" cy="83.9"/><circle cx="164.2" cy="148.4"/><circle cx="182.0" cy="138.6"/><circle cx="133.1" cy="62.1"/><circle cx="127.5" cy="70.1"/><circle cx="163.9" cy="114.1"/><circle cx="202.1" cy="69.7"/><circle cx="94.7" cy="152.8"/><circle cx="163.5" cy="71.6"/><circle cx="172.5" cy="108.7"/><circle cx="155.7" cy="92.2"/><circle cx="174.5" cy="88.0"/><circle cx="108.5" cy="141.4"/><circle cx="102.0" cy="109.7"/><circle cx="204.8" cy="50.6"/><circle cx="195.4" cy="111.6"/><circle cx="190.9" cy="68.9"/><circle cx="190.8" cy="145.7"/><circle cx="204.3" cy="115.3"/><circle cx="184.7" cy="121.2"/><circle cx="209.8" cy="104.7"/><circle cx="155.4" cy="62.5"/><circle cx="101.5" cy="148.7"/><circle cx="139.5" cy="104.8"/><circle cx="167.0" cy="85.9"/><circle cx="126.9" cy="128.6"/><circle cx="134.4" cy="66.1"/><circle cx="110.3" cy="133.0"/><circle cx="142.8" cy="119.4"/><circle cx="135.0" cy="102.3"/><circle cx="115.8" cy="112.2"/><circle cx="196.3" cy="44.1"/><circle cx="169.6" cy="126.0"/><circle cx="55.5" cy="109.9"/><circle cx="202.8" cy="153.2"/><circle cx="166.5" cy="116.0"/><circle cx="109.9" cy="81.1"/><circle cx="200.1" cy="104.8"/><circle cx="133.8" cy="81.2"/><circle cx="120.4" cy="81.8"/><circle cx="119.0" cy="118.7"/><circle cx="135.6" cy="149.9"/><circle cx="165.3" cy="46.9"/><circle cx="119.4" cy="108.9"/><circle cx="143.3" cy="127.7"/><circle cx="183.6" cy="118.8"/><circle cx="128.6" cy="158.2"/><circle cx="129.1" cy="105.5"/><circle cx="115.1" cy="85.0"/><circle cx="248.8" cy="130.5"/><circle cx="119.9" cy="158.9"/><circle cx="192.3" cy="148.8"/><circle cx="217.2" cy="84.0"/><circle cx="101.2" cy="154.5"/><circle cx="191.6" cy="131.2"/><circle cx="148.2" cy="63.8"/><circle cx="110.1" cy="127.5"/><circle cx="194.7" cy="155.6"/><circle cx="160.0" cy="108.7"/><circle cx="107.7" cy="60.3"/><circle cx="167.8" cy="99.8"/><circle cx="87.8" cy="142.1"/><circle cx="179.8" cy="152.5"/><circle cx="145.2" cy="94.7"/><circle cx="232.9" cy="102.5"/><circle cx="92.8" cy="153.8"/><circle cx="172.9" cy="111.5"/><circle cx="156.5" cy="122.2"/><circle cx="149.8" cy="144.4"/><circle cx="108.3" cy="140.8"/><circle cx="110.9" cy="81.9"/><circle cx="113.3" cy="56.5"/><circle cx="106.0" cy="122.6"/><circle cx="102.9" cy="156.2"/><circle cx="166.2" cy="145.2"/><circle cx="160.5" cy="81.6"/><circle cx="102.8" cy="102.1"/><circle cx="119.3" cy="71.1"/><circle cx="187.1" cy="56.2"/><circle cx="101.6" cy="81.5"/><circle cx="119.5" cy="123.2"/><circle cx="207.6" cy="126.8"/><circle cx="182.0" cy="149.8"/><circle cx="182.9" cy="127.3"/><circle cx="203.0" cy="160.1"/><circle cx="135.0" cy="134.6"/><circle cx="91.5" cy="110.7"/><circle cx="147.0" cy="151.8"/><circle cx="145.7" cy="126.5"/><circle cx="190.0" cy="123.9"/><circle cx="118.8" cy="113.3"/><circle cx="122.1" cy="83.4"/><circle cx="150.7" cy="67.4"/><circle cx="213.5" cy="72.5"/><circle cx="126.8" cy="92.3"/><circle cx="125.2" cy="83.7"/><circle cx="182.3" cy="152.7"/><circle cx="165.6" cy="61.3"/><circle cx="186.0" cy="145.0"/><circle cx="161.4" cy="88.3"/><circle cx="166.9" cy="100.5"/><circle cx="177.1" cy="62.9"/><circle cx="165.8" cy="69.9"/><circle cx="207.8" cy="91.3"/><circle cx="191.5" cy="82.6"/><circle cx="215.6" cy="126.1"/><circle cx="184.0" cy="83.2"/><circle cx="167.7" cy="136.8"/><circle cx="200.2" cy="152.8"/><circle cx="148.4" cy="70.1"/><circle cx="154.2" cy="77.6"/><circle cx="204.8" cy="84.7"/><circle cx="214.2" cy="96.9"/><circle cx="107.6" cy="137.8"/><circle cx="114.8" cy="136.6"/><circle cx="197.2" cy="66.2"/><circle cx="144.7" cy="65.6"/><circle cx="92.8" cy="118.6"/><circle cx="155.8" cy="142.3"/><circle cx="163.3" cy="60.5"/><circle cx="175.5" cy="74.4"/><circle cx="143.2" cy="123.3"/><circle cx="138.5" cy="87.4"/><circle cx="145.7" cy="124.1"/><circle cx="117.7" cy="109.7"/><circle cx="157.9" cy="60.1"/><circle cx="113.8" cy="67.8"/><circle cx="87.5" cy="132.8"/><circle cx="190.1" cy="48.2"/><circle cx="84.4" cy="152.2"/><circle cx="115.5" cy="51.3"/><circle cx="98.0" cy="156.4"/><circle cx="148.3" cy="82.5"/><circle cx="168.1" cy="109.4"/><circle cx="131.2" cy="132.5"/><circle cx="126.6" cy="140.6"/><circle cx="158.4" cy="137.6"/><circle cx="110.1" cy="100.8"/><circle cx="173.9" cy="96.3"/><circle cx="208.8" cy="110.6"/><circle cx="189.2" cy="145.0"/><circle cx="186.8" cy="124.1"/><circle cx="100.6" cy="128.2"/><circle cx="87.4" cy="129.9"/><circle cx="159.2" cy="80.4"/><circle cx="115.1" cy="119.4"/><circle cx="146.4" cy="58.3"/><circle cx="265.2" cy="143.9"/><circle cx="185.9" cy="38.9"/><circle cx="191.3" cy="87.5"/><circle cx="114.1" cy="58.8"/><circle cx="94.1" cy="141.5"/><circle cx="197.1" cy="138.4"/><circle cx="135.3" cy="67.9"/><circle cx="127.8" cy="156.7"/><circle cx="197.4" cy="133.2"/><circle cx="144.5" cy="71.1"/><circle cx="164.2" cy="115.3"/><circle cx="123.2" cy="49.4"/><circle cx="193.5" cy="149.4"/><circle cx="171.4" cy="126.1"/><circle cx="172.0" cy="120.9"/><circle cx="134.5" cy="56.8"/><circle cx="117.2" cy="70.9"/><circle cx="118.1" cy="142.1"/><circle cx="160.2" cy="101.2"/><circle cx="140.1" cy="71.2"/><circle cx="199.6" cy="106.6"/><circle cx="164.1" cy="158.0"/><circle cx="190.2" cy="121.1"/><circle cx="152.7" cy="156.1"/><circle cx="197.3" cy="77.9"/><circle cx="179.8" cy="61.0"/><circle cx="189.8" cy="149.3"/><circle cx="204.7" cy="137.3"/><circle cx="192.8" cy="160.5"/><circle cx="87.8" cy="124.2"/><circle cx="122.7" cy="107.5"/><circle cx="70.3" cy="119.1"/><circle cx="214.2" cy="113.0"/><circle cx="138.0" cy="66.5"/><circle cx="126.9" cy="98.2"/><circle cx="134.1" cy="74.3"/><circle cx="157.8" cy="63.4"/><circle cx="165.6" cy="45.2"/><circle cx="126.8" cy="128.2"/><circle cx="137.7" cy="63.4"/><circle cx="85.8" cy="123.8"/><circle cx="108.0" cy="73.4"/><circle cx="189.1" cy="98.1"/><circle cx="195.5" cy="85.2"/><circle cx="120.1" cy="127.8"/><circle cx="113.4" cy="68.1"/><circle cx="212.1" cy="83.7"/><circle cx="159.5" cy="46.4"/><circle cx="101.8" cy="96.1"/><circle cx="128.3" cy="128.2"/><circle cx="85.7" cy="135.3"/><circle cx="94.9" cy="155.9"/><circle cx="246.4" cy="102.2"/><circle cx="117.3" cy="50.6"/><circle cx="125.7" cy="117.1"/><circle cx="187.6" cy="80.8"/><circle cx="151.2" cy="84.7"/><circle cx="178.4" cy="122.4"/><circle cx="133.4" cy="72.5"/><circle cx="149.5" cy="80.6"/><circle cx="178.5" cy="48.1"/><circle cx="161.5" cy="106.9"/><circle cx="112.6" cy="106.9"/><circle cx="96.2" cy="89.1"/><circle cx="97.7" cy="154.6"/><circle cx="192.2" cy="139.0"/><circle cx="151.7" cy="121.4"/><circle cx="138.3" cy="37.8"/><circle cx="133.9" cy="62.3"/><circle cx="98.4" cy="83.2"/><circle cx="128.8" cy="75.3"/><circle cx="154.5" cy="146.1"/><circle cx="150.6" cy="64.3"/><circle cx="196.0" cy="160.6"/><circle cx="185.0" cy="59.5"/><circle cx="197.5" cy="150.4"/><circle cx="115.1" cy="105.1"/><circle cx="105.2" cy="158.6"/><circle cx="129.0" cy="83.3"/><circle cx="135.4" cy="122.1"/><circle cx="183.6" cy="64.2"/><circle cx="193.3" cy="39.8"/><circle cx="116.6" cy="72.8"/><circle cx="115.2" cy="49.1"/><circle cx="198.6" cy="47.6"/><circle cx="189.4" cy="93.6"/><circle cx="107.4" cy="145.2"/><circle cx="125.1" cy="114.3"/><circle cx="167.5" cy="151.8"/><circle cx="87.7" cy="160.6"/><circle cx="136.6" cy="65.2"/><circle cx="200.5" cy="129.4"/><circle cx="182.0" cy="89.4"/><circle cx="213.7" cy="120.8"/><circle cx="115.6" cy="41.2"/><circle cx="110.2" cy="159.4"/><circle cx="94.5" cy="145.4"/><circle cx="163.5" cy="130.1"/><circle cx="119.4" cy="117.7"/><circle cx="198.5" cy="76.7"/><circle cx="121.0" cy="140.8"/><circle cx="93.0" cy="128.5"/><circle cx="95.9" cy="91.8"/><circle cx="213.6" cy="77.5"/><circle cx="172.1" cy="156.8"/><circle cx="130.2" cy="84.9"/><circle cx="174.4" cy="44.4"/><circle cx="162.4" cy="96.8"/><circle cx="135.6" cy="128.2"/><circle cx="89.9" cy="150.8"/><circle cx="177.1" cy="154.1"/><circle cx="139.7" cy="65.9"/><circle cx="145.5" cy="72.5"/><circle cx="134.6" cy="56.8"/><circle cx="176.4" cy="138.9"/><circle cx="176.0" cy="83.5"/><circle cx="190.8" cy="52.3"/><circle cx="80.5" cy="113.1"/><circle cx="169.2" cy="51.0"/><circle cx="179.7" cy="133.5"/><circle cx="213.4" cy="84.0"/><circle cx="167.2" cy="159.6"/><circle cx="132.0" cy="40.1"/><circle cx="98.9" cy="132.5"/><circle cx="103.3" cy="56.8"/><circle cx="107.4" cy="94.0"/><circle cx="107.4" cy="127.9"/><circle cx="199.7" cy="146.1"/><circle cx="185.2" cy="144.9"/><circle cx="169.1" cy="72.2"/><circle cx="152.3" cy="103.2"/><circle cx="224.2" cy="138.5"/><circle cx="78.1" cy="130.0"/><circle cx="184.6" cy="128.8"/><circle cx="144.2" cy="93.2"/><circle cx="157.4" cy="69.6"/><circle cx="116.0" cy="83.8"/><circle cx="203.4" cy="108.9"/><circle cx="117.4" cy="120.8"/><circle cx="184.0" cy="44.7"/><circle cx="112.4" cy="114.9"/><circle cx="99.3" cy="123.6"/><circle cx="168.4" cy="144.1"/><circle cx="160.3" cy="147.3"/><circle cx="180.7" cy="100.6"/><circle cx="84.0" cy="131.3"/><circle cx="127.3" cy="144.6"/><circle cx="118.2" cy="158.7"/><circle cx="154.7" cy="97.6"/><circle cx="116.4" cy="66.1"/><circle cx="161.7" cy="39.5"/><circle cx="130.9" cy="58.9"/><circle cx="183.6" cy="85.7"/><circle cx="134.2" cy="157.2"/><circle cx="89.4" cy="143.8"/><circle cx="178.4" cy="62.0"/><circle cx="82.9" cy="121.5"/><circle cx="152.4" cy="104.9"/><circle cx="91.9" cy="156.3"/><circle cx="134.1" cy="113.2"/><circle cx="117.0" cy="65.6"/><circle cx="126.3" cy="82.0"/><circle cx="164.8" cy="145.5"/><circle cx="132.3" cy="57.5"/><circle cx="252.7" cy="79.4"/><circle cx="111.8" cy="122.7"/><circle cx="137.7" cy="78.9"/><circle cx="92.9" cy="135.4"/><circle cx="197.0" cy="76.3"/><circle cx="96.1" cy="127.4"/><circle cx="118.5" cy="121.1"/><circle cx="172.8" cy="159.9"/><circle cx="198.6" cy="86.1"/><circle cx="71.6" cy="118.3"/><circle cx="191.4" cy="47.2"/><circle cx="225.0" cy="138.0"/><circle cx="128.0" cy="146.8"/><circle cx="182.5" cy="130.3"/><circle cx="128.8" cy="146.5"/><circle cx="184.7" cy="128.6"/><circle cx="137.9" cy="111.8"/><circle cx="117.6" cy="66.4"/><circle cx="139.7" cy="52.3"/><circle cx="92.9" cy="109.0"/><circle cx="98.9" cy="90.4"/><circle cx="172.1" cy="51.5"/><circle cx="135.5" cy="64.7"/><circle cx="253.5" cy="85.7"/><circle cx="142.7" cy="107.4"/><circle cx="150.4" cy="131.9"/><circle cx="137.5" cy="46.3"/><circle cx="100.1" cy="72.5"/><circle cx="218.6" cy="98.1"/><circle cx="93.2" cy="88.8"/><circle cx="211.9" cy="141.2"/><circle cx="184.3" cy="133.6"/><circle cx="188.4" cy="145.0"/><circle cx="97.0" cy="157.5"/><circle cx="115.6" cy="96.3"/><circle cx="184.4" cy="134.5"/><circle cx="178.8" cy="46.4"/><circle cx="220.7" cy="91.0"/><circle cx="144.8" cy="159.0"/><circle cx="119.1" cy="132.0"/><circle cx="147.2" cy="125.2"/><circle cx="133.5" cy="78.9"/><circle cx="161.0" cy="150.3"/><circle cx="122.5" cy="43.2"/><circle cx="155.8" cy="94.9"/><circle cx="190.4" cy="46.2"/><circle cx="176.1" cy="118.8"/><circle cx="127.6" cy="97.6"/><circle cx="91.5" cy="106.8"/><circle cx="106.4" cy="82.1"/><circle cx="147.5" cy="90.4"/><circle cx="183.9" cy="119.4"/><circle cx="61.3" cy="155.6"/><circle cx="164.2" cy="111.0"/><circle cx="108.7" cy="149.0"/><circle cx="165.0" cy="159.6"/><circle cx="175.2" cy="131.0"/><circle cx="191.2" cy="118.5"/><circle cx="148.1" cy="153.9"/><circle cx="181.6" cy="129.3"/><circle cx="156.4" cy="129.5"/><circle cx="162.9" cy="134.4"/><circle cx="190.5" cy="110.8"/><circle cx="110.1" cy="135.2"/><circle cx="144.9" cy="55.0"/><circle cx="143.4" cy="54.8"/><circle cx="101.0" cy="152.2"/><circle cx="230.2" cy="103.7"/><circle cx="194.4" cy="67.2"/><circle cx="105.6" cy="50.8"/><circle cx="139.7" cy="73.4"/><circle cx="127.4" cy="98.8"/><circle cx="120.6" cy="124.6"/><circle cx="103.5" cy="98.6"/><circle cx="191.0" cy="103.2"/><circle cx="163.9" cy="93.1"/><circle cx="179.3" cy="133.0"/><circle cx="133.1" cy="59.7"/><circle cx="141.3" cy="59.4"/><circle cx="88.5" cy="120.1"/><circle cx="92.7" cy="95.4"/><circle cx="125.7" cy="85.2"/><circle cx="175.0" cy="68.3"/><circle cx="118.1" cy="93.1"/><circle cx="93.6" cy="137.0"/><circle cx="131.3" cy="95.8"/><circle cx="92.4" cy="140.1"/><circle cx="171.3" cy="67.5"/><circle cx="130.6" cy="149.8"/><circle cx="185.2" cy="58.7"/><circle cx="146.5" cy="66.6"/><circle cx="179.7" cy="94.5"/><circle cx="207.2" cy="56.8"/><circle cx="196.8" cy="45.6"/><circle cx="190.1" cy="124.6"/><circle cx="169.4" cy="80.4"/><circle cx="196.6" cy="77.6"/><circle cx="168.1" cy="72.5"/><circle cx="169.4" cy="120.7"/><circle cx="202.0" cy="116.0"/><circle cx="185.1" cy="52.1"/><circle cx="105.5" cy="141.3"/><circle cx="186.1" cy="61.6"/><circle cx="145.6" cy="155.2"/><circle cx="106.2" cy="75.0"/><circle cx="64.4" cy="85.6"/><circle cx="105.7" cy="93.6"/><circle cx="180.5" cy="153.8"/><circle cx="196.5" cy="140.8"/><circle cx="147.3" cy="95.3"/><circle cx="190.1" cy="58.4"/><circle cx="206.4" cy="125.4"/><circle cx="158.0" cy="76.2"/><circle cx="183.3" cy="99.6"/><circle cx="134.9" cy="117.0"/><circle cx="86.2" cy="94.7"/><circle cx="108.4" cy="148.1"/><circle cx="121.5" cy="66.6"/><circle cx="111.9" cy="126.6"/><circle cx="163.3" cy="113.2"/><circle cx="225.9" cy="59.7"/><circle cx="177.0" cy="132.0"/><circle cx="155.2" cy="69.3"/><circle cx="199.5" cy="139.9"/><circle cx="125.0" cy="120.2"/><circle cx="158.2" cy="103.8"/><circle cx="160.3" cy="58.1"/><circle cx="181.3" cy="92.9"/><circle cx="143.3" cy="107.1"/><circle cx="167.3" cy="155.2"/><circle cx="177.2" cy="95.8"/><circle cx="187.2" cy="93.6"/><circle cx="138.0" cy="93.2"/><circle cx="220.6" cy="96.3"/><circle cx="148.4" cy="67.5"/><circle cx="164.8" cy="148.2"/><circle cx="203.3" cy="147.0"/><circle cx="179.4" cy="138.2"/><circle cx="206.3" cy="54.3"/><circle cx="184.3" cy="142.4"/><circle cx="180.4" cy="65.1"/><circle cx="186.4" cy="110.9"/><circle cx="212.2" cy="68.5"/><circle cx="165.7" cy="43.4"/><circle cx="146.0" cy="121.5"/><circle cx="113.4" cy="59.2"/><circle cx="165.1" cy="154.9"/><circle cx="91.4" cy="103.2"/><circle cx="171.2" cy="115.6"/><circle cx="176.9" cy="144.7"/><circle cx="138.6" cy="135.2"/><circle cx="146.8" cy="68.8"/><circle cx="142.9" cy="158.9"/><circle cx="139.8" cy="139.7"/><circle cx="179.5" cy="104.3"/><circle cx="214.4" cy="110.4"/><circle cx="147.5" cy="89.9"/><circle cx="136.0" cy="82.0"/><circle cx="163.8" cy="127.7"/><circle cx="81.2" cy="140.8"/><circle cx="142.3" cy="150.2"/><circle cx="103.4" cy="63.9"/><circle cx="163.8" cy="45.3"/><circle cx="147.7" cy="45.9"/><circle cx="123.9" cy="74.0"/><circle cx="153.5" cy="63.5"/><circle cx="129.3" cy="124.4"/><circle cx="121.8" cy="105.6"/><circle cx="113.4" cy="117.3"/><circle cx="99.8" cy="153.3"/><circle cx="150.7" cy="83.2"/><circle cx="208.9" cy="150.4"/><circle cx="109.9" cy="80.6"/><circle cx="122.0" cy="113.3"/><circle cx="104.9" cy="132.6"/><circle cx="173.5" cy="86.5"/><circle cx="96.7" cy="77.1"/><circle cx="101.9" cy="78.8"/><circle cx="75.5" cy="154.7"/><circle cx="71.5" cy="155.4"/><circle cx="129.3" cy="43.9"/><circle cx="186.5" cy="154.0"/><circle cx="129.2" cy="82.8"/><circle cx="86.0" cy="124.3"/><circle cx="162.9" cy="132.9"/><circle cx="114.9" cy="47.4"/><circle cx="124.5" cy="41.3"/><circle cx="146.2" cy="113.7"/><circle cx="177.4" cy="134.5"/><circle cx="196.1" cy="52.5"/><circle cx="198.9" cy="79.7"/><circle cx="202.4" cy="139.3"/><circle cx="205.8" cy="150.1"/><circle cx="153.2" cy="105.2"/><circle cx="117.8" cy="112.6"/><circle cx="107.0" cy="92.8"/><circle cx="154.5" cy="150.7"/><circle cx="137.7" cy="57.1"/><circle cx="99.4" cy="121.3"/><circle cx="100.5" cy="155.7"/><circle cx="137.2" cy="149.1"/><circle cx="128.9" cy="121.0"/><circle cx="139.2" cy="139.0"/><circle cx="127.4" cy="126.3"/><circle cx="190.2" cy="85.7"/><circle cx="204.9" cy="103.6"/><circle cx="83.4" cy="154.6"/><circle cx="134.8" cy="90.9"/><circle cx="197.1" cy="49.1"/><circle cx="106.1" cy="83.7"/><circle cx="110.2" cy="114.7"/><circle cx="194.8" cy="98.4"/><circle cx="96.6" cy="144.4"/><circle cx="173.6" cy="145.5"/><circle cx="129.8" cy="105.4"/><circle cx="117.1" cy="99.1"/><circle cx="147.9" cy="95.7"/><circle cx="153.2" cy="58.6"/><circle cx="155.2" cy="125.7"/><circle cx="107.4" cy="94.4"/><circle cx="160.2" cy="128.0"/><circle cx="165.8" cy="128.7"/><circle cx="82.0" cy="132.2"/><circle cx="195.5" cy="143.5"/><circle cx="225.0" cy="67.7"/><circle cx="171.7" cy="58.7"/><circle cx="131.1" cy="50.0"/><circle cx="172.9" cy="101.7"/><circle cx="108.1" cy="126.9"/><circle cx="151.6" cy="86.6"/><circle cx="188.7" cy="143.3"/><circle cx="185.0" cy="89.6"/><circle cx="206.1" cy="129.9"/><circle cx="108.8" cy="133.2"/><circle cx="230.6" cy="78.1"/><circle cx="91.3" cy="110.2"/><circle cx="178.4" cy="91.3"/><circle cx="96.7" cy="149.0"/><circle cx="171.1" cy="128.0"/><circle cx="217.8" cy="60.8"/><circle cx="155.8" cy="102.3"/><circle cx="148.9" cy="94.1"/><circle cx="153.4" cy="107.1"/><circle cx="183.4" cy="101.7"/><circle cx="108.4" cy="158.8"/><circle cx="210.2" cy="120.1"/><circle cx="156.8" cy="109.2"/><circle cx="102.5" cy="140.6"/><circle cx="127.8" cy="80.9"/><circle cx="193.6" cy="104.5"/><circle cx="171.6" cy="53.4"/><circle cx="171.2" cy="73.2"/><circle cx="215.5" cy="133.8"/><circle cx="101.9" cy="131.8"/><circle cx="198.5" cy="133.1"/><circle cx="193.8" cy="96.4"/><circle cx="117.1" cy="100.6"/><circle cx="118.6" cy="152.6"/><circle cx="166.5" cy="142.2"/><circle cx="213.9" cy="82.8"/><circle cx="170.9" cy="108.9"/><circle cx="93.7" cy="115.2"/><circle cx="213.7" cy="82.5"/><circle cx="243.5" cy="118.0"/><circle cx="144.8" cy="160.8"/><circle cx="215.9" cy="89.0"/><circle cx="137.4" cy="160.0"/><circle cx="178.4" cy="114.1"/><circle cx="153.0" cy="152.0"/><circle cx="114.1" cy="44.3"/><circle cx="183.9" cy="111.8"/><circle cx="161.8" cy="90.5"/><circle cx="157.7" cy="109.6"/><circle cx="131.1" cy="81.2"/><circle cx="99.0" cy="123.6"/><circle cx="102.6" cy="158.7"/><circle cx="195.9" cy="148.1"/><circle cx="86.9" cy="127.4"/><circle cx="184.0" cy="62.6"/><circle cx="216.9" cy="100.6"/><circle cx="114.6" cy="149.5"/><circle cx="104.6" cy="69.9"/><circle cx="122.0" cy="37.6"/><circle cx="201.4" cy="152.4"/><circle cx="125.1" cy="116.8"/><circle cx="96.0" cy="127.5"/><circle cx="92.9" cy="107.7"/><circle cx="175.2" cy="55.2"/><circle cx="103.4" cy="68.7"/><circle cx="170.8" cy="157.9"/><circle cx="154.7" cy="42.4"/><circle cx="135.6" cy="48.1"/><circle cx="158.7" cy="154.6"/><circle cx="122.9" cy="128.2"/><circle cx="104.6" cy="129.5"/><circle cx="183.0" cy="129.7"/><circle cx="75.5" cy="128.4"/><circle cx="200.7" cy="74.0"/><circle cx="112.6" cy="159.7"/><circle cx="117.4" cy="74.5"/><circle cx="138.8" cy="137.5"/><circle cx="195.9" cy="123.1"/><circle cx="173.6" cy="152.6"/><circle cx="152.6" cy="132.9"/><circle cx="147.7" cy="116.8"/><circle cx="127.8" cy="108.6"/><circle cx="134.4" cy="88.3"/><circle cx="201.5" cy="48.1"/><circle cx="83.2" cy="144.6"/><circle cx="184.8" cy="141.4"/><circle cx="142.2" cy="79.6"/><circle cx="221.4" cy="160.5"/><circle cx="157.3" cy="43.5"/><circle cx="187.1" cy="84.9"/><circle cx="215.6" cy="137.2"/><circle cx="190.7" cy="145.4"/><circle cx="186.9" cy="159.9"/><circle cx="117.3" cy="61.2"/><circle cx="133.5" cy="68.0"/><circle cx="200.5" cy="85.8"/><circle cx="183.6" cy="119.0"/><circle cx="125.8" cy="138.1"/><circle cx="164.7" cy="96.5"/><circle cx="110.1" cy="113.5"/><circle cx="166.8" cy="119.6"/><circle cx="145.1" cy="56.3"/><circle cx="181.4" cy="102.4"/><circle cx="217.3" cy="141.8"/><circle cx="167.5" cy="147.6"/><circle cx="175.9" cy="76.5"/><circle cx="126.4" cy="132.3"/><circle cx="195.5" cy="134.3"/><circle cx="196.7" cy="159.1"/><circle cx="106.4" cy="100.8"/><circle cx="135.2" cy="105.0"/><circle cx="207.4" cy="126.1"/><circle cx="154.3" cy="154.9"/><circle cx="115.0" cy="84.5"/><circle cx="188.6" cy="126.0"/><circle cx="174.6" cy="98.2"/><circle cx="156.4" cy="77.5"/><circle cx="139.0" cy="66.5"/><circle cx="138.8" cy="74.4"/><circle cx="143.6" cy="63.4"/><circle cx="123.6" cy="42.8"/><circle cx="171.6" cy="153.7"/><circle cx="131.0" cy="41.0"/><circle cx="60.2" cy="156.0"/><circle cx="93.0" cy="129.2"/><circle cx="184.9" cy="140.9"/><circle cx="121.3" cy="126.6"/><circle cx="154.3" cy="118.9"/><circle cx="132.0" cy="121.8"/><circle cx="202.7" cy="90.1"/><circle cx="190.0" cy="139.5"/><circle cx="90.8" cy="123.0"/><circle cx="90.9" cy="117.8"/><circle cx="171.7" cy="63.0"/><circle cx="139.5" cy="133.3"/><circle cx="138.4" cy="127.8"/><circle cx="184.4" cy="111.7"/><circle cx="198.2" cy="83.0"/><circle cx="161.2" cy="69.5"/><circle cx="127.0" cy="128.7"/><circle cx="149.2" cy="66.2"/><circle cx="158.9" cy="98.0"/><circle cx="142.6" cy="94.3"/><circle cx="209.7" cy="70.1"/><circle cx="121.6" cy="133.2"/><circle cx="210.0" cy="108.2"/><circle cx="154.0" cy="105.5"/><circle cx="231.4" cy="145.8"/><circle cx="88.9" cy="146.0"/><circle cx="98.1" cy="150.9"/><circle cx="112.8" cy="156.0"/><circle cx="175.1" cy="107.0"/><circle cx="123.5" cy="107.5"/><circle cx="173.7" cy="153.9"/><circle cx="156.0" cy="71.2"/><circle cx="205.0" cy="108.3"/><circle cx="81.2" cy="123.6"/><circle cx="220.4" cy="87.3"/><circle cx="91.4" cy="101.5"/><circle cx="106.9" cy="92.4"/><circle cx="206.5" cy="125.4"/><circle cx="195.9" cy="148.4"/><circle cx="109.3" cy="97.6"/><circle cx="110.1" cy="151.9"/><circle cx="92.9" cy="126.6"/><circle cx="97.4" cy="116.1"/><circle cx="184.5" cy="106.0"/><circle cx="157.5" cy="55.4"/><circle cx="201.7" cy="89.9"/><circle cx="202.1" cy="91.6"/><circle cx="126.8" cy="159.7"/><circle cx="209.9" cy="47.9"/><circle cx="213.6" cy="157.2"/><circle cx="96.4" cy="157.0"/><circle cx="91.0" cy="133.0"/><circle cx="136.6" cy="119.5"/><circle cx="182.5" cy="111.5"/><circle cx="172.3" cy="121.0"/><circle cx="80.5" cy="109.2"/><circle cx="218.7" cy="50.7"/><circle cx="192.3" cy="63.7"/><circle cx="156.7" cy="49.7"/><circle cx="154.9" cy="90.8"/><circle cx="112.8" cy="110.8"/><circle cx="95.7" cy="115.4"/><circle cx="106.7" cy="103.5"/><circle cx="90.6" cy="157.7"/><circle cx="179.8" cy="106.7"/><circle cx="116.8" cy="152.9"/><circle cx="195.3" cy="151.7"/><circle cx="179.4" cy="108.3"/><circle cx="196.1" cy="142.6"/><circle cx="99.4" cy="102.4"/><circle cx="143.0" cy="157.5"/><circle cx="168.7" cy="142.2"/><circle cx="84.3" cy="81.6"/><circle cx="205.5" cy="124.0"/><circle cx="208.7" cy="86.1"/><circle cx="80.9" cy="103.3"/><circle cx="121.3" cy="126.4"/><circle cx="203.5" cy="94.3"/><circle cx="86.8" cy="118.4"/><circle cx="125.8" cy="136.6"/><circle cx="199.4" cy="93.9"/><circle cx="94.2" cy="137.2"/><circle cx="202.4" cy="142.2"/><circle cx="123.8" cy="140.1"/><circle cx="133.8" cy="156.9"/><circle cx="193.7" cy="141.6"/><circle cx="231.4" cy="149.9"/><circle cx="120.0" cy="150.7"/><circle cx="112.1" cy="58.7"/><circle cx="209.2" cy="132.4"/><circle cx="115.2" cy="138.5"/><circle cx="186.8" cy="45.7"/><circle cx="115.0" cy="114.5"/><circle cx="111.9" cy="140.6"/><circle cx="150.8" cy="64.9"/><circle cx="97.4" cy="156.4"/><circle cx="124.6" cy="112.8"/><circle cx="89.2" cy="127.0"/><circle cx="190.2" cy="155.0"/><circle cx="188.4" cy="129.5"/><circle cx="168.0" cy="55.5"/><circle cx="99.5" cy="137.0"/><circle cx="162.4" cy="137.2"/><circle cx="200.1" cy="90.1"/><circle cx="187.1" cy="102.4"/><circle cx="107.0" cy="150.1"/><circle cx="97.9" cy="123.2"/><circle cx="120.5" cy="143.3"/><circle cx="122.1" cy="137.8"/><circle cx="197.6" cy="71.9"/><circle cx="110.2" cy="126.2"/><circle cx="140.8" cy="109.3"/><circle cx="171.7" cy="148.3"/><circle cx="129.9" cy="68.4"/><circle cx="138.5" cy="52.5"/><circle cx="124.8" cy="92.0"/><circle cx="160.7" cy="158.1"/><circle cx="195.1" cy="95.9"/><circle cx="184.2" cy="91.0"/><circle cx="183.2" cy="132.8"/><circle cx="148.3" cy="141.6"/><circle cx="87.6" cy="118.9"/><circle cx="124.5" cy="116.6"/><circle cx="144.8" cy="92.9"/><circle cx="195.9" cy="139.2"/><circle cx="151.0" cy="75.4"/><circle cx="115.1" cy="132.0"/><circle cx="133.9" cy="86.4"/><circle cx="241.4" cy="145.5"/><circle cx="176.5" cy="160.5"/><circle cx="195.7" cy="46.1"/><circle cx="101.3" cy="131.4"/><circle cx="117.6" cy="67.7"/><circle cx="108.9" cy="77.0"/><circle cx="188.4" cy="112.4"/><circle cx="121.6" cy="70.0"/><circle cx="229.6" cy="60.9"/><circle cx="108.0" cy="82.5"/><circle cx="120.1" cy="147.1"/><circle cx="93.6" cy="144.9"/><circle cx="163.3" cy="129.3"/><circle cx="94.5" cy="140.2"/><circle cx="76.6" cy="160.0"/><circle cx="129.3" cy="159.6"/><circle cx="187.9" cy="112.9"/><circle cx="121.6" cy="48.8"/><circle cx="223.3" cy="147.6"/><circle cx="87.2" cy="87.7"/><circle cx="122.8" cy="84.8"/><circle cx="114.6" cy="102.1"/><circle cx="86.0" cy="155.9"/><circle cx="202.6" cy="111.2"/><circle cx="171.0" cy="101.0"/><circle cx="113.0" cy="91.4"/><circle cx="114.4" cy="83.1"/><circle cx="188.0" cy="138.7"/><circle cx="146.8" cy="66.3"/><circle cx="157.6" cy="88.1"/><circle cx="162.7" cy="81.8"/><circle cx="129.5" cy="113.9"/><circle cx="152.1" cy="124.4"/><circle cx="181.9" cy="157.5"/><circle cx="85.3" cy="138.8"/><circle cx="121.8" cy="156.7"/><circle cx="205.7" cy="159.9"/><circle cx="157.4" cy="60.5"/><circle cx="182.7" cy="144.0"/><circle cx="178.4" cy="68.9"/><circle cx="132.2" cy="91.6"/><circle cx="106.3" cy="99.0"/><circle cx="176.3" cy="58.1"/><circle cx="217.3" cy="127.8"/><circle cx="101.6" cy="76.5"/><circle cx="196.3" cy="160.0"/><circle cx="145.6" cy="59.3"/><circle cx="205.2" cy="97.4"/><circle cx="171.3" cy="60.7"/><circle cx="112.2" cy="137.2"/><circle cx="99.4" cy="103.5"/><circle cx="129.8" cy="81.7"/><circle cx="133.6" cy="61.1"/><circle cx="226.9" cy="151.7"/><circle cx="108.6" cy="74.6"/><circle cx="219.5" cy="127.4"/><circle cx="151.7" cy="107.1"/><circle cx="222.2" cy="152.5"/><circle cx="150.5" cy="67.2"/><circle cx="121.6" cy="135.3"/><circle cx="124.1" cy="43.6"/><circle cx="167.1" cy="98.6"/><circle cx="111.0" cy="126.0"/><circle cx="155.1" cy="120.3"/><circle cx="193.0" cy="86.1"/><circle cx="101.5" cy="80.4"/><circle cx="124.2" cy="146.2"/><circle cx="125.3" cy="58.3"/><circle cx="169.5" cy="141.0"/><circle cx="164.8" cy="119.0"/><circle cx="110.6" cy="126.1"/><circle cx="109.6" cy="145.4"/><circle cx="105.6" cy="110.1"/><circle cx="148.1" cy="76.4"/><circle cx="213.6" cy="142.9"/><circle cx="99.2" cy="114.1"/><circle cx="203.2" cy="155.9"/><circle cx="126.4" cy="90.6"/><circle cx="158.0" cy="136.0"/><circle cx="160.5" cy="105.4"/><circle cx="172.0" cy="104.2"/><circle cx="140.0" cy="56.5"/><circle cx="125.2" cy="114.0"/><circle cx="201.6" cy="149.7"/><circle cx="187.5" cy="156.8"/><circle cx="146.8" cy="112.8"/><circle cx="147.8" cy="121.8"/><circle cx="96.8" cy="127.1"/><circle cx="149.6" cy="114.2"/><circle cx="159.2" cy="73.9"/><circle cx="107.7" cy="133.1"/><circle cx="152.3" cy="47.2"/><circle cx="178.5" cy="119.2"/><circle cx="158.1" cy="67.5"/><circle cx="140.3" cy="121.9"/><circle cx="128.9" cy="156.9"/><circle cx="210.0" cy="135.7"/><circle cx="155.1" cy="115.1"/><circle cx="181.8" cy="122.8"/><circle cx="82.1" cy="95.6"/><circle cx="85.5" cy="117.4"/><circle cx="134.8" cy="88.8"/><circle cx="145.8" cy="120.4"/><circle cx="77.6" cy="155.4"/><circle cx="163.9" cy="87.5"/><circle cx="162.8" cy="60.5"/><circle cx="196.9" cy="50.8"/><circle cx="223.6" cy="113.7"/><circle cx="142.9" cy="87.6"/><circle cx="118.0" cy="61.9"/><circle cx="189.9" cy="118.0"/><circle cx="107.4" cy="114.3"/><circle cx="204.9" cy="141.3"/><circle cx="178.2" cy="60.5"/><circle cx="181.3" cy="58.9"/><circle cx="190.2" cy="139.5"/><circle cx="161.6" cy="62.8"/><circle cx="174.6" cy="46.1"/><circle cx="92.4" cy="73.4"/><circle cx="166.1" cy="68.0"/><circle cx="206.1" cy="89.7"/><circle cx="167.1" cy="50.4"/><circle cx="133.2" cy="83.7"/><circle cx="144.1" cy="146.9"/><circle cx="81.8" cy="114.5"/><circle cx="137.9" cy="127.5"/><circle cx="193.0" cy="42.4"/><circle cx="247.7" cy="62.8"/><circle cx="204.7" cy="134.8"/><circle cx="167.0" cy="42.1"/><circle cx="197.0" cy="157.9"/><circle cx="254.9" cy="94.6"/><circle cx="155.9" cy="154.9"/><circle cx="119.2" cy="92.9"/><circle cx="149.5" cy="51.3"/><circle cx="195.9" cy="137.2"/><circle cx="121.2" cy="80.6"/><circle cx="196.5" cy="89.9"/><circle cx="152.7" cy="134.4"/><circle cx="133.7" cy="106.0"/><circle cx="181.8" cy="142.6"/><circle cx="98.8" cy="97.8"/><circle cx="107.6" cy="139.9"/><circle cx="142.1" cy="102.5"/><circle cx="173.8" cy="52.7"/><circle cx="130.0" cy="63.7"/><circle cx="155.3" cy="78.0"/><circle cx="186.6" cy="50.6"/><circle cx="149.3" cy="158.8"/><circle cx="173.3" cy="145.7"/><circle cx="170.4" cy="44.9"/><circle cx="108.3" cy="91.3"/><circle cx="139.8" cy="53.2"/><circle cx="146.2" cy="143.6"/><circle cx="198.7" cy="94.5"/><circle cx="141.5" cy="144.7"/><circle cx="129.5" cy="154.7"/><circle cx="213.6" cy="72.2"/><circle cx="113.4" cy="153.3"/><circle cx="151.2" cy="161.0"/><circle cx="192.2" cy="130.5"/><circle cx="123.7" cy="48.8"/><circle cx="139.3" cy="66.6"/><circle cx="205.1" cy="128.6"/><circle cx="150.6" cy="156.0"/><circle cx="204.6" cy="45.0"/><circle cx="119.8" cy="50.1"/><circle cx="169.4" cy="143.4"/><circle cx="205.6" cy="142.0"/><circle cx="167.8" cy="93.7"/><circle cx="114.4" cy="115.1"/><circle cx="204.7" cy="117.8"/><circle cx="124.7" cy="119.6"/><circle cx="138.3" cy="100.8"/><circle cx="189.5" cy="125.1"/><circle cx="180.8" cy="121.9"/><circle cx="179.9" cy="126.4"/><circle cx="184.0" cy="58.8"/><circle cx="186.6" cy="53.1"/><circle cx="112.5" cy="140.2"/><circle cx="125.1" cy="116.2"/><circle cx="192.0" cy="53.2"/><circle cx="62.4" cy="150.0"/><circle cx="132.7" cy="145.6"/><circle cx="199.1" cy="48.0"/><circle cx="174.6" cy="154.2"/><circle cx="194.3" cy="105.2"/><circle cx="116.8" cy="157.4"/><circle cx="171.1" cy="49.5"/><circle cx="144.3" cy="106.2"/><circle cx="110.4" cy="120.6"/><circle cx="168.0" cy="143.7"/><circle cx="232.6" cy="64.4"/><circle cx="91.1" cy="97.9"/><circle cx="110.7" cy="47.9"/><circle cx="232.6" cy="131.1"/><circle cx="185.6" cy="136.2"/><circle cx="124.2" cy="71.3"/><circle cx="191.2" cy="153.7"/><circle cx="166.0" cy="128.2"/><circle cx="102.8" cy="91.2"/><circle cx="146.1" cy="82.9"/><circle cx="201.8" cy="154.3"/><circle cx="192.9" cy="108.9"/><circle cx="234.4" cy="113.8"/><circle cx="203.5" cy="71.3"/><circle cx="103.3" cy="62.6"/><circle cx="159.2" cy="60.1"/><circle cx="266.3" cy="91.4"/><circle cx="149.2" cy="47.1"/><circle cx="199.2" cy="99.1"/><circle cx="156.4" cy="78.6"/><circle cx="179.9" cy="99.4"/><circle cx="179.3" cy="141.7"/><circle cx="189.5" cy="113.3"/><circle cx="144.6" cy="58.8"/><circle cx="256.3" cy="67.2"/><circle cx="180.8" cy="72.2"/><circle cx="115.9" cy="68.1"/><circle cx="116.6" cy="123.6"/><circle cx="105.1" cy="148.3"/><circle cx="180.4" cy="59.5"/><circle cx="106.7" cy="131.9"/><circle cx="209.2" cy="160.0"/><circle cx="170.7" cy="57.4"/><circle cx="108.9" cy="94.2"/><circle cx="189.1" cy="81.0"/><circle cx="132.8" cy="71.6"/><circle cx="231.1" cy="64.3"/><circle cx="122.1" cy="72.7"/><circle cx="128.1" cy="119.8"/><circle cx="122.3" cy="79.0"/><circle cx="164.4" cy="89.5"/><circle cx="113.0" cy="123.4"/><circle cx="213.9" cy="78.4"/><circle cx="95.0" cy="131.0"/><circle cx="115.9" cy="87.1"/><circle cx="78.7" cy="104.5"/><circle cx="214.8" cy="70.8"/><circle cx="189.4" cy="155.5"/><circle cx="150.3" cy="128.0"/><circle cx="138.0" cy="129.8"/><circle cx="127.9" cy="123.5"/><circle cx="131.9" cy="110.7"/><circle cx="212.5" cy="74.1"/><circle cx="170.4" cy="127.2"/><circle cx="96.5" cy="66.4"/><circle cx="111.5" cy="50.7"/><circle cx="179.5" cy="38.5"/><circle cx="109.6" cy="100.2"/><circle cx="229.9" cy="156.7"/><circle cx="113.3" cy="114.8"/><circle cx="144.2" cy="68.9"/><circle cx="222.4" cy="151.5"/><circle cx="128.8" cy="148.5"/><circle cx="179.2" cy="49.2"/><circle cx="137.8" cy="128.7"/><circle cx="135.1" cy="115.0"/><circle cx="109.5" cy="81.0"/><circle cx="114.6" cy="99.2"/><circle cx="190.9" cy="158.3"/><circle cx="208.8" cy="72.0"/><circle cx="140.2" cy="64.7"/><circle cx="207.3" cy="111.7"/><circle cx="202.1" cy="91.2"/><circle cx="152.1" cy="47.7"/><circle cx="111.2" cy="118.7"/><circle cx="109.1" cy="144.2"/><circle cx="107.8" cy="120.0"/><circle cx="94.7" cy="147.1"/><circle cx="101.0" cy="154.7"/><circle cx="177.5" cy="104.5"/><circle cx="106.3" cy="77.7"/><circle cx="164.0" cy="148.6"/><circle cx="201.0" cy="147.1"/><circle cx="157.8" cy="47.9"/><circle cx="211.2" cy="105.3"/><circle cx="203.7" cy="100.9"/><circle cx="112.0" cy="72.8"/><circle cx="123.0" cy="159.0"/><circle cx="188.9" cy="58.6"/><circle cx="217.9" cy="109.4"/><circle cx="212.4" cy="114.8"/><circle cx="173.0" cy="74.1"/><circle cx="198.7" cy="159.9"/><circle cx="202.2" cy="102.6"/><circle cx="116.5" cy="118.4"/><circle cx="209.9" cy="123.6"/><circle cx="156.4" cy="156.3"/><circle cx="176.7" cy="148.3"/><circle cx="178.0" cy="140.6"/><circle cx="178.3" cy="50.8"/><circle cx="156.9" cy="97.2"/><circle cx="220.1" cy="139.7"/><circle cx="185.7" cy="136.5"/><circle cx="102.8" cy="107.6"/><circle cx="193.5" cy="142.5"/><circle cx="153.7" cy="83.6"/><circle cx="151.3" cy="43.5"/><circle cx="108.3" cy="79.2"/><circle cx="195.2" cy="155.1"/><circle cx="199.8" cy="124.2"/><circle cx="147.0" cy="105.5"/><circle cx="205.6" cy="107.7"/><circle cx="196.5" cy="123.8"/><circle cx="186.8" cy="152.3"/><circle cx="216.5" cy="141.1"/><circle cx="148.5" cy="151.5"/><circle cx="182.4" cy="95.2"/><circle cx="220.6" cy="81.7"/><circle cx="91.4" cy="118.1"/><circle cx="84.6" cy="150.9"/><circle cx="164.8" cy="132.1"/><circle cx="102.7" cy="136.5"/><circle cx="132.0" cy="71.3"/><circle cx="153.6" cy="74.2"/><circle cx="126.2" cy="137.2"/><circle cx="184.1" cy="76.8"/><circle cx="166.0" cy="69.2"/><circle cx="124.4" cy="159.9"/><circle cx="191.1" cy="99.0"/><circle cx="246.7" cy="142.3"/><circle cx="105.0" cy="154.5"/><circle cx="145.8" cy="123.6"/><circle cx="174.0" cy="110.9"/><circle cx="183.6" cy="109.9"/><circle cx="123.5" cy="69.8"/><circle cx="135.8" cy="75.3"/><circle cx="204.6" cy="92.6"/><circle cx="120.5" cy="158.7"/><circle cx="221.1" cy="94.2"/><circle cx="153.1" cy="51.6"/><circle cx="108.5" cy="71.5"/><circle cx="108.2" cy="78.2"/><circle cx="197.0" cy="118.8"/><circle cx="167.3" cy="141.7"/><circle cx="205.3" cy="142.8"/><circle cx="149.4" cy="48.9"/><circle cx="115.1" cy="71.9"/><circle cx="205.2" cy="125.6"/><circle cx="157.3" cy="45.7"/><circle cx="153.8" cy="153.4"/><circle cx="125.5" cy="84.5"/><circle cx="97.8" cy="157.8"/><circle cx="107.5" cy="115.9"/><circle cx="184.2" cy="77.8"/><circle cx="172.1" cy="68.8"/><circle cx="96.3" cy="101.6"/><circle cx="157.0" cy="134.7"/><circle cx="122.9" cy="49.7"/><circle cx="153.2" cy="98.3"/><circle cx="154.3" cy="80.7"/><circle cx="122.1" cy="84.3"/><circle cx="168.1" cy="159.5"/><circle cx="112.2" cy="84.6"/><circle cx="135.1" cy="71.1"/><circle cx="93.1" cy="124.4"/><circle cx="101.5" cy="123.2"/><circle cx="120.3" cy="101.7"/><circle cx="148.5" cy="121.4"/><circle cx="101.0" cy="157.5"/><circle cx="146.4" cy="58.3"/><circle cx="121.9" cy="104.0"/><circle cx="103.1" cy="97.6"/><circle cx="185.4" cy="100.7"/><circle cx="206.1" cy="95.5"/><circle cx="180.7" cy="127.7"/><circle cx="88.7" cy="123.2"/><circle cx="185.9" cy="152.7"/><circle cx="114.6" cy="69.5"/><circle cx="206.4" cy="123.2"/><circle cx="162.3" cy="119.5"/><circle cx="163.8" cy="145.9"/><circle cx="152.3" cy="93.3"/><circle cx="195.2" cy="142.2"/><circle cx="99.5" cy="119.4"/><circle cx="147.9" cy="143.9"/><circle cx="111.4" cy="128.3"/><circle cx="168.7" cy="71.4"/><circle cx="124.3" cy="151.7"/><circle cx="178.2" cy="45.6"/><circle cx="154.8" cy="41.5"/><circle cx="98.9" cy="92.5"/><circle cx="132.0" cy="143.1"/><circle cx="134.5" cy="60.4"/><circle cx="144.7" cy="64.8"/><circle cx="122.9" cy="139.6"/><circle cx="187.6" cy="137.0"/><circle cx="148.0" cy="118.5"/><circle cx="96.2" cy="104.7"/><circle cx="204.7" cy="51.0"/><circle cx="120.3" cy="87.6"/><circle cx="190.0" cy="103.2"/><circle cx="144.4" cy="63.9"/><circle cx="89.8" cy="129.7"/><circle cx="195.9" cy="144.6"/><circle cx="171.5" cy="147.2"/><circle cx="197.0" cy="142.4"/><circle cx="139.0" cy="107.3"/><circle cx="113.0" cy="91.1"/><circle cx="136.0" cy="46.4"/><circle cx="212.1" cy="82.8"/><circle cx="107.8" cy="51.7"/><circle cx="112.4" cy="76.5"/><circle cx="137.0" cy="115.5"/><circle cx="144.8" cy="101.1"/><circle cx="82.8" cy="104.4"/><circle cx="118.6" cy="119.8"/><circle cx="129.3" cy="158.6"/><circle cx="239.8" cy="120.5"/><circle cx="169.9" cy="145.4"/><circle cx="120.2" cy="86.3"/><circle cx="86.8" cy="135.8"/><circle cx="118.8" cy="120.3"/><circle cx="170.0" cy="155.0"/><circle cx="145.9" cy="46.4"/><circle cx="192.9" cy="148.1"/><circle cx="163.3" cy="111.2"/><circle cx="108.6" cy="148.9"/><circle cx="202.3" cy="83.3"/><circle cx="163.1" cy="126.7"/><circle cx="110.8" cy="131.9"/><circle cx="109.1" cy="137.4"/><circle cx="141.3" cy="140.0"/><circle cx="105.2" cy="158.6"/><circle cx="97.3" cy="158.3"/><circle cx="233.5" cy="111.2"/><circle cx="207.3" cy="67.0"/><circle cx="174.1" cy="153.5"/><circle cx="137.3" cy="73.5"/><circle cx="164.0" cy="92.1"/><circle cx="116.8" cy="47.0"/><circle cx="98.5" cy="119.4"/><circle cx="171.0" cy="104.1"/><circle cx="153.7" cy="47.3"/><circle cx="195.2" cy="139.7"/><circle cx="216.3" cy="91.8"/><circle cx="174.6" cy="65.5"/><circle cx="123.0" cy="152.3"/><circle cx="101.7" cy="67.1"/><circle cx="129.2" cy="153.6"/><circle cx="97.5" cy="138.0"/><circle cx="84.4" cy="149.7"/><circle cx="90.4" cy="134.1"/><circle cx="185.5" cy="36.4"/><circle cx="193.1" cy="61.2"/><circle cx="121.2" cy="109.1"/><circle cx="134.9" cy="82.3"/><circle cx="184.4" cy="59.3"/><circle cx="235.0" cy="71.7"/><circle cx="190.9" cy="119.7"/><circle cx="78.9" cy="158.7"/><circle cx="160.7" cy="126.4"/><circle cx="114.2" cy="96.2"/><circle cx="187.5" cy="110.6"/><circle cx="196.1" cy="156.6"/><circle cx="184.4" cy="90.9"/><circle cx="136.4" cy="71.6"/><circle cx="140.5" cy="86.8"/><circle cx="109.8" cy="98.0"/><circle cx="111.1" cy="115.8"/><circle cx="192.8" cy="129.1"/><circle cx="168.0" cy="47.8"/><circle cx="152.4" cy="76.4"/><circle cx="98.4" cy="62.1"/><circle cx="138.9" cy="120.5"/><circle cx="193.8" cy="140.3"/><circle cx="176.2" cy="107.3"/><circle cx="181.9" cy="112.0"/><circle cx="177.6" cy="118.5"/><circle cx="136.6" cy="100.6"/><circle cx="191.8" cy="52.2"/><circle cx="152.0" cy="81.9"/><circle cx="110.8" cy="95.7"/><circle cx="225.9" cy="102.2"/><circle cx="171.3" cy="128.0"/><circle cx="108.9" cy="72.1"/><circle cx="141.1" cy="114.7"/><circle cx="91.2" cy="145.4"/><circle cx="91.2" cy="142.8"/><circle cx="165.8" cy="88.3"/><circle cx="83.5" cy="124.8"/><circle cx="160.9" cy="101.6"/><circle cx="205.2" cy="133.7"/><circle cx="174.6" cy="57.8"/><circle cx="172.0" cy="112.8"/><circle cx="124.0" cy="106.6"/><circle cx="163.1" cy="73.3"/><circle cx="191.7" cy="82.9"/><circle cx="108.2" cy="85.5"/><circle cx="216.1" cy="83.5"/><circle cx="119.8" cy="60.9"/><circle cx="224.7" cy="121.5"/><circle cx="175.9" cy="157.1"/><circle cx="188.3" cy="137.7"/><circle cx="126.5" cy="127.0"/><circle cx="202.0" cy="79.1"/><circle cx="193.3" cy="132.4"/><circle cx="131.8" cy="132.8"/><circle cx="192.3" cy="67.4"/><circle cx="97.0" cy="71.6"/><circle cx="217.0" cy="112.0"/><circle cx="145.8" cy="89.3"/><circle cx="204.1" cy="118.1"/><circle cx="102.7" cy="94.2"/><circle cx="168.6" cy="142.9"/><circle cx="202.1" cy="83.7"/><circle cx="178.7" cy="101.3"/><circle cx="200.3" cy="64.0"/><circle cx="154.6" cy="96.1"/><circle cx="158.1" cy="135.2"/><circle cx="179.0" cy="61.7"/><circle cx="138.1" cy="135.8"/><circle cx="157.9" cy="72.3"/><circle cx="126.2" cy="53.1"/><circle cx="204.7" cy="142.5"/><circle cx="111.6" cy="54.2"/><circle cx="170.3" cy="112.3"/><circle cx="96.8" cy="103.7"/><circle cx="134.9" cy="53.0"/><circle cx="103.4" cy="135.8"/><circle cx="182.3" cy="84.7"/><circle cx="206.7" cy="116.8"/><circle cx="202.6" cy="157.8"/><circle cx="90.9" cy="151.8"/><circle cx="162.2" cy="111.4"/><circle cx="160.6" cy="45.1"/><circle cx="186.7" cy="102.4"/><circle cx="180.6" cy="108.7"/><circle cx="216.0" cy="86.6"/><circle cx="193.5" cy="101.5"/><circle cx="175.9" cy="143.2"/><circle cx="204.7" cy="142.6"/><circle cx="182.5" cy="81.0"/><circle cx="148.5" cy="137.7"/><circle cx="197.7" cy="106.6"/><circle cx="207.5" cy="63.3"/><circle cx="113.8" cy="45.6"/><circle cx="147.4" cy="153.3"/><circle cx="147.0" cy="145.4"/><circle cx="168.1" cy="115.8"/><circle cx="153.9" cy="69.7"/><circle cx="145.9" cy="150.4"/><circle cx="204.8" cy="125.5"/><circle cx="125.5" cy="92.1"/><circle cx="96.2" cy="123.9"/><circle cx="83.9" cy="98.6"/><circle cx="115.5" cy="153.6"/><circle cx="221.7" cy="104.0"/><circle cx="97.6" cy="79.0"/><circle cx="158.1" cy="91.7"/><circle cx="112.6" cy="124.6"/><circle cx="110.2" cy="147.7"/><circle cx="130.4" cy="112.8"/><circle cx="93.3" cy="133.8"/><circle cx="171.2" cy="48.0"/><circle cx="83.7" cy="135.6"/><circle cx="142.1" cy="159.3"/><circle cx="156.4" cy="114.1"/><circle cx="90.8" cy="95.7"/><circle cx="169.4" cy="61.8"/><circle cx="210.1" cy="105.1"/><circle cx="172.5" cy="101.3"/><circle cx="130.8" cy="131.7"/><circle cx="175.1" cy="124.4"/><circle cx="128.0" cy="127.8"/><circle cx="177.2" cy="128.2"/><circle cx="123.3" cy="142.2"/><circle cx="157.7" cy="137.2"/><circle cx="163.0" cy="136.2"/><circle cx="121.0" cy="82.3"/><circle cx="195.7" cy="129.5"/><circle cx="158.7" cy="94.4"/><circle cx="197.5" cy="59.2"/><circle cx="142.0" cy="97.7"/><circle cx="134.8" cy="158.1"/><circle cx="212.5" cy="117.2"/><circle cx="194.3" cy="77.2"/><circle cx="182.2" cy="119.9"/><circle cx="136.3" cy="146.5"/><circle cx="197.2" cy="158.3"/><circle cx="195.3" cy="79.9"/><circle cx="179.1" cy="84.5"/><circle cx="216.6" cy="97.1"/><circle cx="89.3" cy="129.1"/><circle cx="96.3" cy="122.8"/><circle cx="167.7" cy="94.0"/><circle cx="143.2" cy="50.6"/><circle cx="187.1" cy="149.2"/><circle cx="114.0" cy="121.8"/><circle cx="114.6" cy="90.9"/><circle cx="204.6" cy="78.1"/><circle cx="182.4" cy="89.5"/><circle cx="203.0" cy="94.0"/><circle cx="112.2" cy="134.2"/><circle cx="261.1" cy="132.5"/><circle cx="181.8" cy="42.6"/><circle cx="163.7" cy="48.9"/><circle cx="103.7" cy="63.2"/><circle cx="159.0" cy="42.0"/><circle cx="123.1" cy="142.3"/><circle cx="96.8" cy="105.3"/><circle cx="204.4" cy="111.6"/><circle cx="143.0" cy="118.2"/><circle cx="175.1" cy="153.3"/><circle cx="224.5" cy="101.7"/><circle cx="204.8" cy="80.4"/><circle cx="118.5" cy="59.8"/><circle cx="192.3" cy="90.3"/><circle cx="120.4" cy="140.6"/><circle cx="141.2" cy="104.0"/><circle cx="123.6" cy="112.5"/><circle cx="121.2" cy="126.9"/><circle cx="191.8" cy="58.6"/><circle cx="109.5" cy="86.8"/><circle cx="148.3" cy="132.4"/><circle cx="128.6" cy="114.9"/><circle cx="133.4" cy="140.1"/><circle cx="90.9" cy="112.1"/><circle cx="170.1" cy="63.6"/><circle cx="118.9" cy="107.9"/><circle cx="116.6" cy="44.8"/><circle cx="111.2" cy="138.4"/><circle cx="159.1" cy="87.9"/><circle cx="192.2" cy="102.0"/><circle cx="90.0" cy="134.9"/><circle cx="216.2" cy="67.5"/><circle cx="235.0" cy="79.9"/><circle cx="189.6" cy="158.2"/><circle cx="143.6" cy="159.6"/><circle cx="134.0" cy="79.5"/><circle cx="137.8" cy="72.5"/><circle cx="112.0" cy="139.8"/><circle cx="204.3" cy="97.6"/><circle cx="156.7" cy="151.2"/><circle cx="69.9" cy="128.5"/><circle cx="152.0" cy="102.1"/><circle cx="202.9" cy="95.6"/><circle cx="181.2" cy="91.8"/><circle cx="167.2" cy="78.8"/><circle cx="174.2" cy="59.1"/><circle cx="193.3" cy="78.6"/><circle cx="110.0" cy="98.8"/><circle cx="189.6" cy="147.4"/><circle cx="157.9" cy="76.8"/><circle cx="136.2" cy="134.4"/><circle cx="230.1" cy="125.1"/><circle cx="85.8" cy="158.6"/><circle cx="180.6" cy="140.0"/><circle cx="158.7" cy="47.7"/><circle cx="140.9" cy="114.6"/><circle cx="181.0" cy="118.6"/><circle cx="138.5" cy="72.0"/><circle cx="157.9" cy="131.8"/><circle cx="151.4" cy="160.3"/><circle cx="121.8" cy="83.6"/><circle cx="231.6" cy="63.7"/><circle cx="143.8" cy="115.7"/><circle cx="97.4" cy="114.9"/><circle cx="200.4" cy="69.8"/><circle cx="92.1" cy="113.0"/><circle cx="166.6" cy="65.7"/><circle cx="193.8" cy="117.1"/><circle cx="178.2" cy="122.7"/><circle cx="203.8" cy="62.1"/><circle cx="113.5" cy="149.8"/><circle cx="111.6" cy="140.5"/><circle cx="127.2" cy="152.6"/><circle cx="116.3" cy="152.6"/><circle cx="217.9" cy="135.8"/><circle cx="247.3" cy="42.1"/><circle cx="153.8" cy="49.5"/><circle cx="135.1" cy="82.7"/><circle cx="189.0" cy="85.0"/><circle cx="177.7" cy="153.5"/><circle cx="201.5" cy="140.1"/><circle cx="174.5" cy="45.0"/><circle cx="213.8" cy="68.9"/><circle cx="180.2" cy="121.4"/><circle cx="201.5" cy="127.4"/><circle cx="100.0" cy="134.1"/><circle cx="206.1" cy="46.2"/><circle cx="96.2" cy="112.7"/><circle cx="146.5" cy="140.7"/><circle cx="210.8" cy="136.0"/><circle cx="80.7" cy="128.5"/><circle cx="107.5" cy="105.4"/><circle cx="109.3" cy="143.1"/><circle cx="211.4" cy="91.0"/><circle cx="201.2" cy="118.0"/><circle cx="143.7" cy="141.0"/><circle cx="114.8" cy="52.8"/><circle cx="207.4" cy="105.6"/><circle cx="123.9" cy="85.4"/><circle cx="175.5" cy="75.9"/><circle cx="146.1" cy="156.8"/><circle cx="187.3" cy="122.6"/><circle cx="212.9" cy="115.5"/><circle cx="204.7" cy="102.2"/><circle cx="132.7" cy="85.8"/><circle cx="124.8" cy="136.4"/><circle cx="208.3" cy="134.8"/><circle cx="192.7" cy="84.5"/><circle cx="99.1" cy="89.6"/><circle cx="93.9" cy="95.6"/><circle cx="122.8" cy="137.7"/><circle cx="109.1" cy="110.6"/><circle cx="110.0" cy="47.3"/><circle cx="161.7" cy="100.9"/><circle cx="99.2" cy="103.9"/><circle cx="179.5" cy="118.2"/><circle cx="151.1" cy="52.9"/><circle cx="89.3" cy="68.1"/><circle cx="176.9" cy="104.3"/><circle cx="82.8" cy="157.7"/><circle cx="198.3" cy="73.6"/><circle cx="169.0" cy="62.4"/><circle cx="118.6" cy="124.3"/><circle cx="123.0" cy="120.3"/><circle cx="188.5" cy="160.8"/><circle cx="178.4" cy="119.6"/><circle cx="229.3" cy="62.6"/><circle cx="199.7" cy="115.4"/><circle cx="193.2" cy="139.9"/><circle cx="155.5" cy="155.3"/><circle cx="210.5" cy="107.0"/><circle cx="139.4" cy="129.2"/><circle cx="152.9" cy="74.8"/><circle cx="152.9" cy="100.6"/><circle cx="197.3" cy="86.2"/><circle cx="181.8" cy="154.7"/><circle cx="86.8" cy="138.1"/><circle cx="133.3" cy="123.7"/><circle cx="188.3" cy="105.8"/><circle cx="163.4" cy="134.3"/><circle cx="124.5" cy="54.3"/><circle cx="209.8" cy="116.1"/><circle cx="130.8" cy="112.3"/><circle cx="143.2" cy="137.6"/><circle cx="101.0" cy="86.8"/><circle cx="183.0" cy="46.6"/><circle cx="180.7" cy="84.0"/><circle cx="216.2" cy="119.9"/><circle cx="194.2" cy="46.4"/><circle cx="160.7" cy="134.8"/><circle cx="135.7" cy="148.3"/><circle cx="136.8" cy="145.5"/><circle cx="120.0" cy="91.3"/><circle cx="204.7" cy="127.6"/><circle cx="111.0" cy="57.6"/><circle cx="158.0" cy="84.2"/><circle cx="172.3" cy="137.1"/><circle cx="139.0" cy="91.7"/><circle cx="143.4" cy="134.4"/><circle cx="161.7" cy="69.8"/><circle cx="137.0" cy="122.4"/><circle cx="135.5" cy="146.2"/><circle cx="161.9" cy="160.8"/><circle cx="96.7" cy="115.1"/><circle cx="185.3" cy="125.9"/><circle cx="194.6" cy="116.4"/><circle cx="170.0" cy="67.9"/><circle cx="159.1" cy="106.3"/><circle cx="176.7" cy="76.1"/><circle cx="175.8" cy="131.0"/><circle cx="105.9" cy="110.3"/><circle cx="109.3" cy="141.4"/><circle cx="175.5" cy="151.5"/><circle cx="105.4" cy="116.4"/><circle cx="166.8" cy="117.9"/><circle cx="133.7" cy="76.7"/><circle cx="122.4" cy="38.4"/><circle cx="149.1" cy="89.1"/><circle cx="143.0" cy="92.0"/><circle cx="191.1" cy="86.3"/><circle cx="152.9" cy="120.2"/><circle cx="184.8" cy="149.7"/><circle cx="107.4" cy="95.2"/><circle cx="99.7" cy="140.4"/><circle cx="163.5" cy="100.5"/><circle cx="140.6" cy="151.9"/><circle cx="213.2" cy="83.8"/><circle cx="147.6" cy="107.8"/><circle cx="112.1" cy="61.0"/><circle cx="148.6" cy="124.2"/><circle cx="207.6" cy="136.4"/><circle cx="154.4" cy="108.2"/><circle cx="110.7" cy="148.8"/><circle cx="89.5" cy="129.0"/><circle cx="141.7" cy="144.4"/><circle cx="161.9" cy="152.6"/><circle cx="138.1" cy="97.5"/><circle cx="200.7" cy="137.7"/><circle cx="115.4" cy="52.8"/><circle cx="149.0" cy="47.8"/><circle cx="167.5" cy="89.8"/><circle cx="129.1" cy="51.6"/><circle cx="137.1" cy="127.6"/><circle cx="102.1" cy="142.7"/><circle cx="98.8" cy="124.0"/><circle cx="150.3" cy="51.2"/><circle cx="197.2" cy="88.6"/><circle cx="152.0" cy="57.0"/><circle cx="139.3" cy="151.6"/><circle cx="169.9" cy="109.7"/><circle cx="201.2" cy="87.3"/><circle cx="157.9" cy="148.0"/><circle cx="181.0" cy="63.7"/><circle cx="107.4" cy="149.9"/><circle cx="111.6" cy="111.9"/><circle cx="132.2" cy="104.0"/><circle cx="122.8" cy="145.3"/><circle cx="120.2" cy="114.7"/><circle cx="150.3" cy="142.5"/><circle cx="211.2" cy="66.7"/><circle cx="116.4" cy="66.7"/><circle cx="128.6" cy="129.6"/><circle cx="194.2" cy="158.6"/><circle cx="154.9" cy="141.6"/><circle cx="88.6" cy="154.1"/><circle cx="135.7" cy="41.2"/><circle cx="173.6" cy="132.4"/><circle cx="100.3" cy="108.9"/><circle cx="243.6" cy="128.6"/><circle cx="189.0" cy="120.0"/><circle cx="100.4" cy="82.5"/><circle cx="258.8" cy="148.7"/><circle cx="145.8" cy="137.3"/><circle cx="158.2" cy="159.4"/><circle cx="195.3" cy="39.0"/><circle cx="172.5" cy="47.4"/><circle cx="141.3" cy="90.6"/><circle cx="92.4" cy="127.7"/><circle cx="104.9" cy="73.5"/><circle cx="82.0" cy="150.7"/><circle cx="195.9" cy="115.2"/><circle cx="99.6" cy="76.4"/><circle cx="201.9" cy="131.1"/><circle cx="174.8" cy="61.3"/><circle cx="171.7" cy="59.8"/><circle cx="118.7" cy="65.3"/><circle cx="141.5" cy="129.7"/><circle cx="113.6" cy="71.2"/><circle cx="134.9" cy="118.7"/><circle cx="190.2" cy="91.0"/><circle cx="200.8" cy="137.2"/><circle cx="130.2" cy="73.3"/><circle cx="105.0" cy="142.2"/><circle cx="153.4" cy="74.7"/><circle cx="181.8" cy="160.6"/><circle cx="99.6" cy="87.4"/><circle cx="178.8" cy="109.7"/><circle cx="100.4" cy="153.7"/><circle cx="78.1" cy="108.7"/><circle cx="126.3" cy="153.4"/><circle cx="105.6" cy="143.5"/><circle cx="194.8" cy="70.5"/><circle cx="159.6" cy="90.6"/><circle cx="187.8" cy="96.1"/><circle cx="102.6" cy="75.7"/><circle cx="200.5" cy="151.7"/><circle cx="90.7" cy="148.0"/><circle cx="165.0" cy="125.1"/><circle cx="185.3" cy="112.9"/><circle cx="126.4" cy="68.1"/><circle cx="130.0" cy="56.2"/><circle cx="101.0" cy="154.6"/><circle cx="140.3" cy="159.0"/><circle cx="117.7" cy="138.3"/><circle cx="207.6" cy="123.3"/><circle cx="114.8" cy="56.2"/><circle cx="208.2" cy="147.9"/><circle cx="188.0" cy="89.0"/><circle cx="178.8" cy="92.2"/><circle cx="216.4" cy="89.5"/><circle cx="186.9" cy="146.0"/><circle cx="108.1" cy="89.9"/><circle cx="112.2" cy="54.9"/><circle cx="208.3" cy="106.7"/><circle cx="114.6" cy="160.0"/><circle cx="175.3" cy="139.7"/><circle cx="188.7" cy="142.3"/><circle cx="166.2" cy="43.2"/><circle cx="157.5" cy="54.8"/><circle cx="156.5" cy="46.8"/><circle cx="205.2" cy="144.1"/><circle cx="185.1" cy="157.9"/><circle cx="60.6" cy="140.2"/><circle cx="189.9" cy="141.8"/><circle cx="167.1" cy="120.9"/><circle cx="164.3" cy="97.0"/><circle cx="202.4" cy="54.8"/><circle cx="166.7" cy="106.2"/><circle cx="133.3" cy="115.9"/><circle cx="127.3" cy="128.8"/><circle cx="97.2" cy="89.8"/><circle cx="133.3" cy="39.0"/><circle cx="208.7" cy="104.5"/><circle cx="130.5" cy="149.7"/><circle cx="121.0" cy="67.0"/><circle cx="134.1" cy="95.9"/><circle cx="88.3" cy="126.6"/><circle cx="136.3" cy="99.8"/><circle cx="137.7" cy="158.0"/><circle cx="159.9" cy="144.8"/><circle cx="104.4" cy="101.9"/><circle cx="77.3" cy="104.5"/><circle cx="194.1" cy="98.8"/><circle cx="190.0" cy="115.1"/><circle cx="122.3" cy="114.3"/><circle cx="94.1" cy="113.4"/><circle cx="92.5" cy="156.4"/><circle cx="86.4" cy="127.9"/><circle cx="204.0" cy="128.1"/><circle cx="136.0" cy="132.9"/><circle cx="189.7" cy="149.7"/><circle cx="141.2" cy="70.0"/><circle cx="130.0" cy="139.2"/><circle cx="154.8" cy="104.5"/><circle cx="130.7" cy="132.8"/><circle cx="137.9" cy="120.6"/><circle cx="178.8" cy="94.9"/><circle cx="185.5" cy="157.7"/><circle cx="150.1" cy="72.1"/><circle cx="149.7" cy="156.6"/><circle cx="142.5" cy="125.3"/><circle cx="149.6" cy="151.5"/><circle cx="128.3" cy="54.7"/><circle cx="163.6" cy="129.5"/><circle cx="154.1" cy="139.2"/><circle cx="124.3" cy="98.2"/><circle cx="199.2" cy="77.0"/><circle cx="172.7" cy="76.9"/><circle cx="152.7" cy="134.9"/><circle cx="118.9" cy="64.6"/><circle cx="99.3" cy="137.6"/><circle cx="163.3" cy="92.9"/><circle cx="206.9" cy="157.8"/><circle cx="91.1" cy="130.8"/><circle cx="191.7" cy="67.4"/><circle cx="192.9" cy="71.1"/><circle cx="151.9" cy="77.2"/><circle cx="101.0" cy="89.2"/><circle cx="140.1" cy="105.0"/><circle cx="75.6" cy="112.0"/><circle cx="95.8" cy="113.1"/><circle cx="195.5" cy="154.6"/><circle cx="154.9" cy="129.1"/><circle cx="118.9" cy="159.7"/><circle cx="218.0" cy="72.6"/><circle cx="118.6" cy="116.9"/><circle cx="196.2" cy="52.6"/><circle cx="242.4" cy="95.1"/><circle cx="140.8" cy="91.4"/><circle cx="130.8" cy="82.5"/><circle cx="166.7" cy="130.2"/><circle cx="58.1" cy="153.0"/><circle cx="176.0" cy="119.0"/><circle cx="125.7" cy="63.5"/><circle cx="143.5" cy="84.6"/><circle cx="83.0" cy="142.3"/><circle cx="206.2" cy="53.4"/><circle cx="141.3" cy="151.2"/><circle cx="172.9" cy="129.6"/><circle cx="92.2" cy="157.7"/><circle cx="143.1" cy="78.1"/><circle cx="121.4" cy="96.1"/><circle cx="113.5" cy="116.3"/><circle cx="190.9" cy="147.8"/><circle cx="197.2" cy="93.6"/><circle cx="131.5" cy="57.9"/><circle cx="116.3" cy="132.3"/><circle cx="158.4" cy="78.4"/><circle cx="124.8" cy="135.1"/><circle cx="156.9" cy="52.5"/><circle cx="190.0" cy="49.0"/><circle cx="122.5" cy="43.8"/><circle cx="205.8" cy="158.4"/><circle cx="89.2" cy="92.0"/><circle cx="178.4" cy="94.6"/><circle cx="225.7" cy="103.4"/><circle cx="99.4" cy="86.7"/><circle cx="151.7" cy="143.4"/><circle cx="116.5" cy="125.8"/><circle cx="195.1" cy="70.5"/><circle cx="208.5" cy="126.8"/><circle cx="151.4" cy="150.8"/><circle cx="146.4" cy="35.9"/><circle cx="109.2" cy="74.9"/><circle cx="136.6" cy="129.4"/><circle cx="99.6" cy="69.5"/><circle cx="142.1" cy="38.1"/><circle cx="160.4" cy="112.9"/><circle cx="226.5" cy="75.1"/><circle cx="144.2" cy="64.8"/><circle cx="154.0" cy="56.0"/><circle cx="181.0" cy="95.5"/><circle cx="111.5" cy="86.4"/><circle cx="114.5" cy="81.9"/><circle cx="186.2" cy="80.4"/><circle cx="197.8" cy="114.0"/><circle cx="198.2" cy="79.9"/><circle cx="142.0" cy="96.9"/><circle cx="167.2" cy="113.0"/><circle cx="152.7" cy="82.6"/><circle cx="113.6" cy="138.8"/><circle cx="171.7" cy="97.5"/><circle cx="146.9" cy="61.2"/><circle cx="110.3" cy="114.6"/><circle cx="96.5" cy="148.5"/><circle cx="160.0" cy="138.3"/><circle cx="181.0" cy="127.0"/><circle cx="148.9" cy="131.1"/><circle cx="173.5" cy="141.4"/><circle cx="90.3" cy="108.3"/><circle cx="155.0" cy="105.0"/><circle cx="155.4" cy="46.9"/><circle cx="149.3" cy="136.8"/><circle cx="184.2" cy="131.4"/><circle cx="224.6" cy="121.6"/><circle cx="134.8" cy="80.0"/><circle cx="219.3" cy="117.5"/><circle cx="186.4" cy="76.0"/><circle cx="219.3" cy="154.5"/><circle cx="111.4" cy="131.8"/><circle cx="90.1" cy="157.1"/><circle cx="94.7" cy="129.5"/><circle cx="190.3" cy="93.1"/><circle cx="106.9" cy="131.4"/><circle cx="102.7" cy="86.7"/><circle cx="200.3" cy="77.9"/><circle cx="198.8" cy="87.0"/><circle cx="80.3" cy="116.9"/><circle cx="175.1" cy="140.8"/><circle cx="121.9" cy="85.2"/><circle cx="183.2" cy="85.2"/><circle cx="127.2" cy="95.9"/><circle cx="236.9" cy="127.8"/><circle cx="85.0" cy="155.8"/><circle cx="189.7" cy="129.5"/><circle cx="149.5" cy="136.0"/><circle cx="177.9" cy="82.0"/><circle cx="202.6" cy="85.8"/><circle cx="174.7" cy="140.0"/><circle cx="154.9" cy="157.9"/><circle cx="151.1" cy="58.5"/><circle cx="148.0" cy="138.0"/><circle cx="125.4" cy="95.8"/><circle cx="146.2" cy="110.0"/><circle cx="167.9" cy="69.4"/><circle cx="101.7" cy="116.8"/><circle cx="240.3" cy="100.8"/><circle cx="119.2" cy="140.3"/><circle cx="141.5" cy="44.2"/><circle cx="174.1" cy="83.8"/><circle cx="86.1" cy="117.6"/><circle cx="149.2" cy="160.5"/><circle cx="83.6" cy="101.2"/><circle cx="170.8" cy="52.3"/><circle cx="136.8" cy="118.4"/><circle cx="151.4" cy="142.5"/><circle cx="191.5" cy="91.6"/><circle cx="208.7" cy="64.3"/><circle cx="196.0" cy="128.7"/><circle cx="102.6" cy="67.1"/><circle cx="126.7" cy="114.0"/><circle cx="192.1" cy="136.7"/><circle cx="126.8" cy="130.8"/><circle cx="192.0" cy="152.0"/><circle cx="238.4" cy="63.0"/><circle cx="125.1" cy="92.8"/><circle cx="134.6" cy="60.9"/><circle cx="230.7" cy="116.4"/><circle cx="158.9" cy="37.5"/><circle cx="74.0" cy="125.6"/><circle cx="234.9" cy="83.7"/><circle cx="154.4" cy="152.0"/><circle cx="170.6" cy="117.7"/><circle cx="102.9" cy="138.6"/><circle cx="116.2" cy="130.7"/><circle cx="167.8" cy="125.4"/><circle cx="187.5" cy="103.2"/><circle cx="138.1" cy="81.6"/><circle cx="113.6" cy="72.9"/><circle cx="110.1" cy="86.1"/><circle cx="184.4" cy="94.1"/><circle cx="115.5" cy="156.8"/><circle cx="172.5" cy="54.4"/><circle cx="113.7" cy="122.2"/><circle cx="179.5" cy="95.3"/><circle cx="127.0" cy="93.4"/><circle cx="123.8" cy="53.1"/><circle cx="181.9" cy="43.1"/><circle cx="129.2" cy="91.9"/><circle cx="140.1" cy="72.4"/><circle cx="141.3" cy="73.6"/><circle cx="156.8" cy="58.8"/><circle cx="146.6" cy="80.6"/><circle cx="193.1" cy="128.8"/><circle cx="194.0" cy="131.7"/><circle cx="157.0" cy="51.4"/><circle cx="141.8" cy="122.1"/><circle cx="242.4" cy="62.7"/><circle cx="132.2" cy="100.5"/><circle cx="172.1" cy="103.4"/><circle cx="101.8" cy="81.8"/><circle cx="135.7" cy="145.3"/><circle cx="152.4" cy="57.8"/><circle cx="127.6" cy="90.8"/><circle cx="209.8" cy="70.0"/><circle cx="111.2" cy="124.2"/><circle cx="101.3" cy="101.0"/><circle cx="117.0" cy="145.0"/><circle cx="141.0" cy="73.8"/><circle cx="102.8" cy="149.2"/><circle cx="161.6" cy="153.8"/><circle cx="120.9" cy="147.0"/><circle cx="129.2" cy="145.8"/><circle cx="165.3" cy="59.7"/><circle cx="133.4" cy="52.4"/><circle cx="190.3" cy="142.6"/><circle cx="134.9" cy="160.0"/><circle cx="137.3" cy="133.8"/><circle cx="136.1" cy="123.8"/><circle cx="131.0" cy="110.0"/><circle cx="211.3" cy="126.1"/><circle cx="211.3" cy="90.3"/><circle cx="102.5" cy="154.6"/><circle cx="159.6" cy="49.7"/><circle cx="183.8" cy="131.0"/><circle cx="96.0" cy="157.9"/><circle cx="116.4" cy="117.9"/><circle cx="159.8" cy="102.2"/><circle cx="180.8" cy="95.8"/><circle cx="186.9" cy="107.7"/><circle cx="123.7" cy="158.7"/><circle cx="131.6" cy="88.1"/><circle cx="100.8" cy="114.0"/><circle cx="126.3" cy="108.6"/><circle cx="152.1" cy="153.1"/><circle cx="191.2" cy="119.7"/><circle cx="166.2" cy="148.3"/><circle cx="230.7" cy="89.6"/><circle cx="98.1" cy="120.7"/><circle cx="160.7" cy="143.0"/><circle cx="125.2" cy="84.0"/><circle cx="140.1" cy="90.3"/><circle cx="162.6" cy="122.5"/><circle cx="201.4" cy="89.6"/><circle cx="164.6" cy="114.0"/><circle cx="97.8" cy="155.7"/><circle cx="90.2" cy="144.7"/><circle cx="104.2" cy="125.9"/><circle cx="147.4" cy="84.5"/><circle cx="95.2" cy="138.3"/><circle cx="188.1" cy="97.8"/><circle cx="197.9" cy="116.0"/><circle cx="190.7" cy="143.4"/><circle cx="199.1" cy="78.6"/><circle cx="149.9" cy="84.3"/><circle cx="111.5" cy="157.4"/><circle cx="95.3" cy="148.6"/><circle cx="145.8" cy="100.3"/><circle cx="205.7" cy="138.2"/><circle cx="135.2" cy="77.2"/><circle cx="156.7" cy="93.8"/><circle cx="111.2" cy="123.9"/><circle cx="139.6" cy="124.6"/><circle cx="146.5" cy="70.0"/><circle cx="168.1" cy="105.9"/><circle cx="142.8" cy="126.6"/><circle cx="96.4" cy="77.8"/><circle cx="198.6" cy="83.7"/><circle cx="116.7" cy="113.9"/><circle cx="149.9" cy="55.3"/><circle cx="123.2" cy="128.7"/><circle cx="228.7" cy="85.7"/><circle cx="153.2" cy="152.1"/><circle cx="196.0" cy="146.6"/><circle cx="157.8" cy="148.8"/><circle cx="131.2" cy="111.0"/><circle cx="182.9" cy="51.8"/><circle cx="152.1" cy="109.2"/><circle cx="120.6" cy="150.6"/><circle cx="114.7" cy="140.1"/><circle cx="80.8" cy="134.9"/><circle cx="149.5" cy="113.8"/><circle cx="167.0" cy="94.3"/><circle cx="210.0" cy="88.6"/><circle cx="230.0" cy="67.4"/><circle cx="110.8" cy="118.6"/><circle cx="173.3" cy="102.0"/><circle cx="134.6" cy="120.4"/><circle cx="91.4" cy="86.2"/><circle cx="96.1" cy="131.0"/><circle cx="113.6" cy="55.7"/><circle cx="124.6" cy="152.6"/><circle cx="95.8" cy="93.5"/><circle cx="155.2" cy="139.8"/><circle cx="174.0" cy="80.4"/><circle cx="198.3" cy="65.6"/><circle cx="188.3" cy="148.8"/><circle cx="120.2" cy="45.9"/><circle cx="99.5" cy="153.5"/><circle cx="195.3" cy="109.7"/><circle cx="208.0" cy="69.4"/><circle cx="217.4" cy="128.3"/><circle cx="182.1" cy="110.8"/><circle cx="109.6" cy="105.1"/><circle cx="117.3" cy="141.9"/><circle cx="182.7" cy="140.0"/><circle cx="147.5" cy="99.2"/><circle cx="129.0" cy="85.1"/><circle cx="117.1" cy="65.2"/><circle cx="139.5" cy="154.6"/><circle cx="170.9" cy="131.5"/><circle cx="172.7" cy="135.4"/><circle cx="124.7" cy="160.5"/><circle cx="187.1" cy="141.4"/><circle cx="188.4" cy="47.3"/><circle cx="127.3" cy="49.8"/><circle cx="153.1" cy="111.3"/><circle cx="131.3" cy="49.9"/><circle cx="108.2" cy="59.4"/><circle cx="95.6" cy="84.3"/><circle cx="104.6" cy="153.2"/><circle cx="184.4" cy="72.2"/><circle cx="208.9" cy="87.9"/><circle cx="203.2" cy="77.1"/><circle cx="213.0" cy="82.6"/><circle cx="123.5" cy="112.3"/><circle cx="99.3" cy="80.7"/><circle cx="120.9" cy="79.2"/><circle cx="183.0" cy="146.9"/><circle cx="123.3" cy="104.6"/><circle cx="266.6" cy="64.4"/><circle cx="75.8" cy="108.7"/><circle cx="180.8" cy="91.1"/><circle cx="146.3" cy="123.4"/><circle cx="228.5" cy="109.2"/><circle cx="140.2" cy="118.7"/><circle cx="228.5" cy="71.2"/><circle cx="92.1" cy="133.3"/><circle cx="170.2" cy="114.8"/><circle cx="144.9" cy="97.3"/><circle cx="167.9" cy="117.7"/><circle cx="176.1" cy="106.8"/><circle cx="90.9" cy="109.9"/><circle cx="197.2" cy="116.7"/><circle cx="176.7" cy="153.7"/><circle cx="140.7" cy="157.7"/><circle cx="155.1" cy="74.2"/><circle cx="136.9" cy="119.8"/><circle cx="164.0" cy="96.1"/><circle cx="156.3" cy="115.0"/><circle cx="118.7" cy="142.9"/><circle cx="189.4" cy="98.5"/><circle cx="190.6" cy="160.1"/><circle cx="160.5" cy="101.9"/><circle cx="116.3" cy="52.3"/><circle cx="105.7" cy="158.0"/><circle cx="177.8" cy="98.7"/><circle cx="112.7" cy="76.0"/><circle cx="174.4" cy="135.5"/><circle cx="187.6" cy="143.6"/><circle cx="158.4" cy="149.0"/><circle cx="171.1" cy="116.4"/><circle cx="214.5" cy="160.5"/><circle cx="144.1" cy="118.6"/><circle cx="104.9" cy="123.2"/><circle cx="95.7" cy="145.2"/><circle cx="115.3" cy="105.5"/><circle cx="246.2" cy="70.5"/><circle cx="174.9" cy="119.5"/><circle cx="152.9" cy="43.6"/><circle cx="78.7" cy="148.4"/><circle cx="167.6" cy="160.0"/><circle cx="137.8" cy="59.7"/><circle cx="182.6" cy="60.2"/><circle cx="193.8" cy="123.2"/><circle cx="175.4" cy="72.8"/><circle cx="118.8" cy="97.2"/><circle cx="143.9" cy="61.2"/><circle cx="167.8" cy="159.7"/><circle cx="213.8" cy="67.0"/><circle cx="132.2" cy="130.6"/><circle cx="141.5" cy="76.0"/><circle cx="129.4" cy="146.3"/><circle cx="177.7" cy="136.5"/><circle cx="178.9" cy="61.3"/><circle cx="143.4" cy="82.2"/><circle cx="196.1" cy="56.9"/><circle cx="163.3" cy="67.9"/><circle cx="98.1" cy="51.0"/><circle cx="177.0" cy="104.6"/><circle cx="130.7" cy="123.3"/><circle cx="92.8" cy="91.3"/><circle cx="187.0" cy="122.9"/><circle cx="129.3" cy="138.7"/><circle cx="132.0" cy="69.2"/><circle cx="186.9" cy="67.4"/><circle cx="120.9" cy="160.7"/><circle cx="124.8" cy="113.7"/><circle cx="121.3" cy="46.5"/><circle cx="128.5" cy="124.9"/><circle cx="130.4" cy="148.0"/><circle cx="195.1" cy="71.4"/><circle cx="166.7" cy="134.2"/><circle cx="125.4" cy="117.5"/><circle cx="85.1" cy="148.5"/><circle cx="178.3" cy="154.8"/><circle cx="184.1" cy="113.7"/><circle cx="193.1" cy="84.6"/><circle cx="186.8" cy="90.6"/><circle cx="130.2" cy="92.9"/><circle cx="201.8" cy="144.6"/><circle cx="218.5" cy="77.6"/><circle cx="129.0" cy="155.1"/><circle cx="147.3" cy="57.6"/><circle cx="209.1" cy="93.4"/><circle cx="104.0" cy="155.1"/><circle cx="143.4" cy="83.1"/><circle cx="223.0" cy="86.0"/><circle cx="120.4" cy="148.2"/><circle cx="88.1" cy="99.8"/><circle cx="163.7" cy="134.7"/><circle cx="140.2" cy="82.5"/><circle cx="80.9" cy="157.6"/><circle cx="253.2" cy="88.9"/><circle cx="128.6" cy="135.8"/><circle cx="189.7" cy="61.5"/><circle cx="91.1" cy="145.5"/><circle cx="131.9" cy="119.3"/><circle cx="109.9" cy="81.5"/><circle cx="133.6" cy="46.4"/><circle cx="174.9" cy="128.7"/><circle cx="195.0" cy="62.3"/><circle cx="160.4" cy="61.7"/><circle cx="96.1" cy="113.7"/><circle cx="107.4" cy="64.0"/><circle cx="133.0" cy="114.7"/><circle cx="98.9" cy="108.3"/><circle cx="127.4" cy="136.6"/><circle cx="81.5" cy="146.4"/><circle cx="81.7" cy="139.8"/><circle cx="186.2" cy="56.1"/><circle cx="120.6" cy="147.0"/><circle cx="197.2" cy="46.8"/><circle cx="188.3" cy="125.3"/><circle cx="149.8" cy="110.5"/><circle cx="142.8" cy="49.2"/><circle cx="197.5" cy="87.6"/><circle cx="92.0" cy="119.6"/><circle cx="244.4" cy="103.6"/><circle cx="123.3" cy="128.3"/><circle cx="126.2" cy="108.1"/><circle cx="155.5" cy="65.6"/><circle cx="168.0" cy="100.6"/><circle cx="161.5" cy="157.7"/><circle cx="139.0" cy="143.4"/><circle cx="93.2" cy="97.4"/><circle cx="124.8" cy="110.8"/><circle cx="166.0" cy="118.5"/><circle cx="128.3" cy="145.5"/><circle cx="202.1" cy="109.8"/><circle cx="113.4" cy="149.1"/><circle cx="95.3" cy="81.3"/><circle cx="200.8" cy="112.4"/><circle cx="190.3" cy="143.5"/><circle cx="83.8" cy="136.8"/><circle cx="131.9" cy="122.7"/><circle cx="187.9" cy="111.9"/><circle cx="147.8" cy="123.8"/><circle cx="150.5" cy="82.8"/><circle cx="198.0" cy="99.2"/><circle cx="184.7" cy="100.7"/><circle cx="158.2" cy="57.7"/><circle cx="120.4" cy="103.3"/><circle cx="164.7" cy="103.4"/><circle cx="114.9" cy="147.2"/><circle cx="170.9" cy="117.6"/><circle cx="111.5" cy="131.6"/><circle cx="160.9" cy="89.9"/><circle cx="127.4" cy="87.5"/><circle cx="124.7" cy="49.5"/><circle cx="170.7" cy="69.1"/><circle cx="163.2" cy="91.1"/><circle cx="159.2" cy="113.0"/><circle cx="120.4" cy="134.5"/><circle cx="89.8" cy="126.5"/><circle cx="114.6" cy="131.6"/><circle cx="201.5" cy="72.6"/><circle cx="129.3" cy="133.8"/><circle cx="109.5" cy="101.1"/><circle cx="116.8" cy="94.3"/><circle cx="165.6" cy="115.0"/><circle cx="151.2" cy="90.5"/><circle cx="194.9" cy="73.7"/><circle cx="174.8" cy="66.1"/><circle cx="162.5" cy="158.7"/><circle cx="161.8" cy="110.2"/><circle cx="112.6" cy="110.1"/><circle cx="127.2" cy="89.1"/><circle cx="133.3" cy="98.2"/><circle cx="202.9" cy="126.9"/><circle cx="226.6" cy="85.8"/><circle cx="136.7" cy="97.9"/><circle cx="173.2" cy="83.1"/><circle cx="181.6" cy="118.4"/><circle cx="98.7" cy="134.7"/><circle cx="190.5" cy="113.3"/><circle cx="127.8" cy="131.8"/><circle cx="117.7" cy="64.7"/><circle cx="176.8" cy="154.9"/><circle cx="168.1" cy="100.8"/><circle cx="151.0" cy="68.4"/><circle cx="227.7" cy="78.9"/><circle cx="103.5" cy="119.1"/><circle cx="87.8" cy="120.2"/><circle cx="160.1" cy="69.4"/><circle cx="220.7" cy="79.7"/><circle cx="163.8" cy="148.9"/><circle cx="147.0" cy="136.3"/><circle cx="133.4" cy="117.5"/><circle cx="127.2" cy="46.7"/><circle cx="83.1" cy="119.1"/><circle cx="219.5" cy="118.2"/><circle cx="88.5" cy="160.8"/><circle cx="187.4" cy="111.0"/><circle cx="153.3" cy="68.5"/><circle cx="132.9" cy="77.6"/><circle cx="169.4" cy="107.2"/><circle cx="93.8" cy="119.7"/><circle cx="107.4" cy="53.4"/><circle cx="144.5" cy="102.6"/><circle cx="106.7" cy="150.7"/><circle cx="108.4" cy="121.6"/><circle cx="93.9" cy="97.8"/><circle cx="164.6" cy="120.9"/><circle cx="157.1" cy="50.9"/><circle cx="168.4" cy="139.0"/><circle cx="151.8" cy="92.7"/><circle cx="225.6" cy="127.4"/><circle cx="203.9" cy="69.1"/><circle cx="86.2" cy="158.4"/><circle cx="106.0" cy="150.4"/><circle cx="203.9" cy="84.3"/><circle cx="122.2" cy="143.1"/><circle cx="190.3" cy="77.2"/><circle cx="156.9" cy="61.3"/><circle cx="161.5" cy="38.4"/><circle cx="117.8" cy="153.7"/><circle cx="184.2" cy="155.7"/><circle cx="170.3" cy="130.1"/><circle cx="109.3" cy="111.9"/><circle cx="199.2" cy="127.9"/><circle cx="89.8" cy="149.2"/><circle cx="188.9" cy="139.3"/><circle cx="133.9" cy="139.3"/><circle cx="170.5" cy="83.1"/><circle cx="183.5" cy="147.1"/><circle cx="204.1" cy="57.9"/><circle cx="112.2" cy="42.8"/><circle cx="160.9" cy="89.2"/><circle cx="226.6" cy="98.1"/><circle cx="122.6" cy="156.7"/><circle cx="171.6" cy="102.6"/><circle cx="127.4" cy="45.7"/><circle cx="105.2" cy="51.3"/><circle cx="136.4" cy="56.2"/><circle cx="123.9" cy="122.1"/><circle cx="234.5" cy="128.9"/><circle cx="162.3" cy="135.4"/><circle cx="117.8" cy="41.3"/><circle cx="188.4" cy="108.8"/><circle cx="203.8" cy="88.9"/><circle cx="181.4" cy="118.2"/><circle cx="80.6" cy="102.0"/><circle cx="152.3" cy="140.2"/><circle cx="82.7" cy="93.9"/><circle cx="123.2" cy="89.7"/><circle cx="179.3" cy="64.7"/><circle cx="163.6" cy="57.5"/><circle cx="96.5" cy="119.2"/><circle cx="167.8" cy="59.8"/><circle cx="209.2" cy="111.2"/><circle cx="155.3" cy="67.3"/><circle cx="219.8" cy="122.4"/><circle cx="78.9" cy="101.1"/><circle cx="186.8" cy="122.4"/><circle cx="188.0" cy="159.6"/><circle cx="194.3" cy="141.2"/><circle cx="190.9" cy="153.1"/><circle cx="143.9" cy="42.9"/><circle cx="150.7" cy="70.0"/><circle cx="115.2" cy="141.8"/><circle cx="156.9" cy="38.5"/><circle cx="173.5" cy="79.0"/><circle cx="178.9" cy="107.4"/><circle cx="136.8" cy="137.0"/><circle cx="97.1" cy="152.4"/><circle cx="199.5" cy="159.0"/><circle cx="123.2" cy="115.7"/><circle cx="188.2" cy="104.7"/><circle cx="213.1" cy="107.2"/><circle cx="151.5" cy="112.6"/><circle cx="143.2" cy="57.0"/><circle cx="188.2" cy="84.9"/><circle cx="172.2" cy="149.8"/><circle cx="135.4" cy="148.1"/><circle cx="177.6" cy="50.5"/><circle cx="197.3" cy="107.4"/><circle cx="182.9" cy="115.1"/><circle cx="194.6" cy="88.6"/><circle cx="244.8" cy="126.3"/><circle cx="124.8" cy="53.1"/><circle cx="108.2" cy="138.5"/><circle cx="84.0" cy="126.4"/><circle cx="138.0" cy="98.2"/><circle cx="151.4" cy="75.2"/><circle cx="168.2" cy="139.5"/><circle cx="231.5" cy="86.4"/><circle cx="137.8" cy="64.6"/><circle cx="194.6" cy="51.7"/><circle cx="188.9" cy="71.9"/><circle cx="170.2" cy="84.5"/><circle cx="127.3" cy="98.2"/><circle cx="157.5" cy="74.2"/><circle cx="153.8" cy="134.3"/><circle cx="144.5" cy="114.9"/><circle cx="141.6" cy="52.0"/><circle cx="106.2" cy="88.4"/><circle cx="129.5" cy="62.9"/><circle cx="182.0" cy="106.2"/><circle cx="140.1" cy="160.9"/><circle cx="117.0" cy="150.6"/><circle cx="164.1" cy="76.6"/><circle cx="187.7" cy="81.0"/><circle cx="107.0" cy="82.6"/><circle cx="249.5" cy="53.0"/><circle cx="174.6" cy="140.0"/><circle cx="151.3" cy="133.6"/><circle cx="166.6" cy="111.6"/><circle cx="118.9" cy="135.2"/><circle cx="80.9" cy="120.2"/><circle cx="168.6" cy="88.0"/><circle cx="173.4" cy="124.4"/><circle cx="191.8" cy="92.6"/><circle cx="150.0" cy="67.2"/><circle cx="202.2" cy="146.8"/><circle cx="166.4" cy="160.6"/><circle cx="111.3" cy="112.2"/><circle cx="180.7" cy="124.5"/><circle cx="140.4" cy="138.5"/><circle cx="187.1" cy="128.5"/><circle cx="208.6" cy="72.9"/><circle cx="124.9" cy="118.1"/><circle cx="178.8" cy="43.6"/><circle cx="162.1" cy="128.3"/><circle cx="222.7" cy="104.8"/><circle cx="137.8" cy="130.3"/><circle cx="128.4" cy="117.9"/><circle cx="197.6" cy="151.5"/><circle cx="110.6" cy="130.8"/><circle cx="91.0" cy="93.5"/><circle cx="94.5" cy="87.9"/><circle cx="80.9" cy="124.1"/><circle cx="149.5" cy="149.0"/><circle cx="78.1" cy="149.1"/><circle cx="95.8" cy="107.7"/><circle cx="138.5" cy="150.0"/><circle cx="142.6" cy="117.5"/><circle cx="113.4" cy="86.4"/><circle cx="146.3" cy="56.5"/><circle cx="196.5" cy="138.6"/><circle cx="170.2" cy="38.3"/><circle cx="126.4" cy="86.1"/><circle cx="119.3" cy="135.5"/><circle cx="215.2" cy="86.8"/><circle cx="139.1" cy="129.0"/><circle cx="151.1" cy="126.2"/><circle cx="162.8" cy="92.2"/><circle cx="188.2" cy="83.1"/><circle cx="121.3" cy="116.4"/><circle cx="82.8" cy="131.8"/><circle cx="187.7" cy="59.9"/><circle cx="92.3" cy="72.6"/><circle cx="96.4" cy="140.4"/><circle cx="154.5" cy="93.0"/><circle cx="102.2" cy="113.5"/><circle cx="212.8" cy="145.3"/><circle cx="257.2" cy="156.6"/><circle cx="141.8" cy="98.8"/><circle cx="108.4" cy="104.2"/><circle cx="112.3" cy="86.3"/><circle cx="130.3" cy="56.5"/><circle cx="186.7" cy="103.9"/><circle cx="94.5" cy="101.7"/><circle cx="173.1" cy="143.9"/><circle cx="200.8" cy="146.9"/><circle cx="196.2" cy="130.1"/><circle cx="203.6" cy="82.7"/><circle cx="182.5" cy="51.6"/><circle cx="148.4" cy="54.9"/><circle cx="154.8" cy="154.4"/><circle cx="174.8" cy="99.5"/><circle cx="186.3" cy="36.3"/><circle cx="168.5" cy="156.0"/><circle cx="98.2" cy="93.9"/><circle cx="104.7" cy="91.3"/><circle cx="99.0" cy="156.7"/><circle cx="163.1" cy="143.7"/><circle cx="196.8" cy="101.9"/><circle cx="109.3" cy="67.7"/><circle cx="173.8" cy="119.8"/><circle cx="146.5" cy="125.2"/><circle cx="199.7" cy="123.3"/><circle cx="74.6" cy="144.8"/><circle cx="165.0" cy="54.8"/><circle cx="108.6" cy="67.6"/><circle cx="93.9" cy="131.3"/><circle cx="113.4" cy="115.0"/><circle cx="175.2" cy="156.8"/><circle cx="189.9" cy="105.9"/><circle cx="162.2" cy="97.7"/><circle cx="157.8" cy="81.5"/><circle cx="113.1" cy="154.0"/><circle cx="166.4" cy="136.2"/><circle cx="132.5" cy="129.5"/><circle cx="234.7" cy="151.5"/><circle cx="140.3" cy="126.0"/><circle cx="136.7" cy="119.8"/><circle cx="163.8" cy="136.1"/><circle cx="113.3" cy="121.3"/><circle cx="177.0" cy="96.0"/><circle cx="179.0" cy="82.4"/><circle cx="173.8" cy="56.3"/><circle cx="170.4" cy="128.5"/><circle cx="81.5" cy="129.6"/><circle cx="152.2" cy="80.6"/><circle cx="171.4" cy="93.1"/><circle cx="153.3" cy="140.9"/><circle cx="140.8" cy="128.9"/><circle cx="203.8" cy="96.1"/><circle cx="100.4" cy="75.6"/><circle cx="187.0" cy="117.6"/><circle cx="182.0" cy="155.6"/><circle cx="140.8" cy="87.8"/><circle cx="76.3" cy="108.1"/><circle cx="157.7" cy="128.3"/><circle cx="114.0" cy="64.2"/><circle cx="195.2" cy="156.6"/><circle cx="168.9" cy="75.8"/><circle cx="163.6" cy="43.2"/><circle cx="163.7" cy="67.5"/><circle cx="141.7" cy="139.7"/><circle cx="101.2" cy="84.6"/><circle cx="175.9" cy="93.9"/><circle cx="196.7" cy="113.0"/><circle cx="248.8" cy="134.2"/><circle cx="189.3" cy="142.6"/><circle cx="207.1" cy="80.9"/><circle cx="206.0" cy="147.8"/><circle cx="130.1" cy="125.0"/><circle cx="242.8" cy="125.1"/><circle cx="163.2" cy="154.0"/><circle cx="196.7" cy="88.9"/><circle cx="216.3" cy="125.1"/><circle cx="199.6" cy="58.4"/><circle cx="123.0" cy="107.3"/><circle cx="177.6" cy="131.0"/><circle cx="188.9" cy="59.0"/><circle cx="136.6" cy="125.4"/><circle cx="159.5" cy="141.4"/><circle cx="206.4" cy="148.6"/><circle cx="133.5" cy="160.6"/><circle cx="93.2" cy="151.6"/><circle cx="206.5" cy="155.2"/><circle cx="87.8" cy="153.5"/><circle cx="197.7" cy="125.1"/><circle cx="188.9" cy="57.2"/><circle cx="200.5" cy="126.1"/><circle cx="109.6" cy="77.1"/><circle cx="162.9" cy="57.1"/><circle cx="124.6" cy="136.7"/><circle cx="183.3" cy="159.4"/><circle cx="132.4" cy="135.3"/><circle cx="184.4" cy="135.6"/><circle cx="186.7" cy="111.6"/><circle cx="138.7" cy="104.0"/><circle cx="151.3" cy="139.2"/><circle cx="210.5" cy="155.2"/><circle cx="142.7" cy="40.7"/><circle cx="147.7" cy="136.6"/><circle cx="172.7" cy="121.4"/><circle cx="154.3" cy="51.9"/><circle cx="159.0" cy="158.8"/><circle cx="169.3" cy="134.7"/><circle cx="156.6" cy="141.0"/><circle cx="96.6" cy="70.6"/><circle cx="121.4" cy="126.0"/><circle cx="147.8" cy="94.0"/><circle cx="194.6" cy="141.4"/><circle cx="178.4" cy="143.8"/><circle cx="102.6" cy="104.4"/><circle cx="196.2" cy="147.4"/><circle cx="139.8" cy="148.1"/><circle cx="167.2" cy="155.3"/><circle cx="196.4" cy="56.2"/><circle cx="171.7" cy="115.2"/><circle cx="102.6" cy="78.8"/><circle cx="95.9" cy="94.9"/><circle cx="140.1" cy="101.4"/><circle cx="171.0" cy="40.6"/><circle cx="212.4" cy="129.9"/><circle cx="108.0" cy="120.0"/><circle cx="177.8" cy="154.3"/><circle cx="105.4" cy="60.6"/><circle cx="142.2" cy="119.4"/><circle cx="99.7" cy="63.8"/><circle cx="148.9" cy="91.3"/><circle cx="182.1" cy="63.9"/><circle cx="207.8" cy="44.0"/><circle cx="124.9" cy="56.7"/><circle cx="174.2" cy="68.7"/><circle cx="125.7" cy="160.4"/><circle cx="130.5" cy="62.5"/><circle cx="171.3" cy="85.1"/><circle cx="161.2" cy="53.6"/><circle cx="223.2" cy="71.6"/><circle cx="119.4" cy="76.7"/><circle cx="152.0" cy="131.2"/><circle cx="90.0" cy="92.4"/><circle cx="123.3" cy="159.4"/><circle cx="124.7" cy="84.2"/><circle cx="147.1" cy="117.9"/><circle cx="138.0" cy="68.2"/><circle cx="96.9" cy="145.0"/><circle cx="91.1" cy="145.4"/><circle cx="189.9" cy="136.9"/><circle cx="126.8" cy="101.4"/><circle cx="141.0" cy="116.0"/><circle cx="174.3" cy="75.7"/><circle cx="125.5" cy="124.4"/><circle cx="191.7" cy="56.9"/><circle cx="104.4" cy="75.7"/><circle cx="203.7" cy="151.7"/><circle cx="160.6" cy="97.6"/><circle cx="190.6" cy="121.8"/><circle cx="171.7" cy="93.0"/><circle cx="161.7" cy="42.5"/><circle cx="139.3" cy="144.8"/><circle cx="217.4" cy="116.7"/><circle cx="107.5" cy="90.3"/><circle cx="205.0" cy="80.7"/><circle cx="108.1" cy="54.3"/><circle cx="141.8" cy="156.9"/><circle cx="124.8" cy="110.8"/><circle cx="189.3" cy="124.8"/><circle cx="175.8" cy="124.4"/><circle cx="201.1" cy="152.6"/><circle cx="195.5" cy="156.5"/><circle cx="110.1" cy="155.9"/><circle cx="147.5" cy="125.8"/><circle cx="159.9" cy="96.9"/><circle cx="164.7" cy="98.0"/><circle cx="147.4" cy="61.3"/><circle cx="229.2" cy="79.9"/><circle cx="179.0" cy="131.4"/><circle cx="103.3" cy="139.0"/><circle cx="113.2" cy="74.2"/><circle cx="196.7" cy="90.5"/><circle cx="164.6" cy="55.7"/><circle cx="146.0" cy="70.1"/><circle cx="135.3" cy="59.1"/><circle cx="163.3" cy="75.8"/><circle cx="214.9" cy="125.3"/><circle cx="115.1" cy="83.7"/><circle cx="213.3" cy="98.0"/><circle cx="215.1" cy="146.5"/><circle cx="161.4" cy="46.8"/><circle cx="188.3" cy="113.2"/><circle cx="168.7" cy="82.5"/><circle cx="153.5" cy="49.6"/><circle cx="144.2" cy="66.2"/><circle cx="135.6" cy="58.9"/><circle cx="158.4" cy="151.2"/><circle cx="110.6" cy="105.1"/><circle cx="196.1" cy="95.9"/><circle cx="123.5" cy="114.2"/><circle cx="213.5" cy="69.6"/><circle cx="122.5" cy="128.2"/><circle cx="127.2" cy="67.4"/><circle cx="128.7" cy="141.9"/><circle cx="205.9" cy="96.9"/><circle cx="112.3" cy="85.1"/><circle cx="190.7" cy="51.0"/><circle cx="110.2" cy="152.0"/><circle cx="153.5" cy="146.8"/><circle cx="88.8" cy="89.6"/><circle cx="178.4" cy="56.5"/><circle cx="129.3" cy="89.9"/><circle cx="95.2" cy="102.2"/><circle cx="171.0" cy="152.5"/><circle cx="104.1" cy="160.9"/><circle cx="169.2" cy="125.2"/><circle cx="169.2" cy="120.4"/><circle cx="149.0" cy="104.2"/><circle cx="154.1" cy="47.7"/><circle cx="159.5" cy="138.4"/><circle cx="171.6" cy="59.9"/><circle cx="108.5" cy="128.3"/><circle cx="142.7" cy="134.8"/><circle cx="176.8" cy="150.8"/><circle cx="159.5" cy="78.1"/><circle cx="193.4" cy="56.4"/><circle cx="135.7" cy="158.8"/><circle cx="194.3" cy="114.5"/><circle cx="150.5" cy="41.3"/><circle cx="183.9" cy="132.5"/><circle cx="161.7" cy="108.3"/><circle cx="160.6" cy="42.6"/><circle cx="145.9" cy="134.0"/><circle cx="124.8" cy="146.5"/><circle cx="171.2" cy="91.5"/><circle cx="108.4" cy="65.7"/><circle cx="202.5" cy="94.6"/><circle cx="120.9" cy="122.6"/><circle cx="204.6" cy="154.0"/><circle cx="150.0" cy="103.5"/><circle cx="176.3" cy="142.8"/><circle cx="143.6" cy="157.7"/><circle cx="187.0" cy="156.5"/><circle cx="93.1" cy="125.3"/><circle cx="118.3" cy="107.2"/><circle cx="235.1" cy="95.5"/><circle cx="153.1" cy="57.7"/><circle cx="196.9" cy="53.5"/><circle cx="120.0" cy="84.7"/><circle cx="101.4" cy="117.9"/><circle cx="186.3" cy="135.7"/><circle cx="115.5" cy="126.6"/><circle cx="195.4" cy="68.0"/><circle cx="126.9" cy="158.8"/><circle cx="148.1" cy="84.3"/><circle cx="107.5" cy="154.4"/><circle cx="181.9" cy="96.9"/><circle cx="114.2" cy="40.0"/><circle cx="163.8" cy="120.5"/><circle cx="185.9" cy="151.0"/><circle cx="199.2" cy="59.8"/><circle cx="107.9" cy="75.7"/><circle cx="116.2" cy="78.3"/><circle cx="188.0" cy="83.9"/><circle cx="93.8" cy="144.6"/><circle cx="136.7" cy="83.0"/><circle cx="109.4" cy="75.6"/><circle cx="192.3" cy="93.9"/><circle cx="90.4" cy="125.1"/><circle cx="159.0" cy="74.4"/><circle cx="124.0" cy="141.6"/><circle cx="113.6" cy="143.6"/><circle cx="172.1" cy="85.3"/><circle cx="204.9" cy="71.7"/><circle cx="168.2" cy="141.5"/><circle cx="166.9" cy="97.2"/><circle cx="184.6" cy="109.0"/><circle cx="182.1" cy="89.6"/><circle cx="154.0" cy="99.3"/><circle cx="178.2" cy="160.7"/><circle cx="210.8" cy="88.9"/><circle cx="156.5" cy="89.1"/><circle cx="130.5" cy="114.5"/><circle cx="199.2" cy="87.0"/><circle cx="259.2" cy="114.3"/><circle cx="129.0" cy="141.6"/><circle cx="223.4" cy="40.4"/><circle cx="73.3" cy="120.6"/><circle cx="131.4" cy="153.8"/><circle cx="215.4" cy="68.0"/><circle cx="125.3" cy="43.6"/><circle cx="123.2" cy="79.3"/><circle cx="226.6" cy="53.1"/><circle cx="196.8" cy="136.8"/><circle cx="153.5" cy="137.5"/><circle cx="186.6" cy="74.6"/><circle cx="136.7" cy="123.8"/><circle cx="175.6" cy="48.6"/><circle cx="130.0" cy="87.2"/><circle cx="134.2" cy="118.3"/><circle cx="197.8" cy="76.1"/><circle cx="149.1" cy="43.4"/><circle cx="114.2" cy="61.1"/><circle cx="143.1" cy="157.1"/><circle cx="192.3" cy="149.5"/><circle cx="108.6" cy="66.9"/><circle cx="121.9" cy="136.2"/><circle cx="233.7" cy="134.7"/><circle cx="130.6" cy="79.4"/><circle cx="140.5" cy="154.9"/><circle cx="178.2" cy="115.7"/><circle cx="215.0" cy="103.2"/><circle cx="192.8" cy="104.4"/><circle cx="190.8" cy="150.7"/><circle cx="143.0" cy="108.5"/><circle cx="179.2" cy="128.3"/><circle cx="82.7" cy="123.7"/><circle cx="83.2" cy="159.3"/><circle cx="172.3" cy="65.9"/><circle cx="179.8" cy="51.6"/><circle cx="120.9" cy="125.5"/><circle cx="143.4" cy="93.1"/><circle cx="154.8" cy="66.8"/><circle cx="158.1" cy="111.5"/><circle cx="182.7" cy="143.2"/><circle cx="156.5" cy="138.4"/><circle cx="209.4" cy="86.8"/><circle cx="155.5" cy="108.2"/><circle cx="146.4" cy="150.6"/><circle cx="149.2" cy="102.0"/><circle cx="178.8" cy="72.9"/><circle cx="186.0" cy="133.4"/><circle cx="174.7" cy="102.3"/><circle cx="100.9" cy="51.4"/><circle cx="200.2" cy="118.2"/><circle cx="147.5" cy="137.2"/><circle cx="149.2" cy="89.3"/><circle cx="106.0" cy="147.2"/><circle cx="180.9" cy="137.1"/><circle cx="109.2" cy="60.1"/><circle cx="200.2" cy="59.0"/><circle cx="149.9" cy="42.5"/><circle cx="175.7" cy="65.0"/><circle cx="171.9" cy="121.5"/><circle cx="265.5" cy="42.5"/><circle cx="266.0" cy="49.3"/><circle cx="344.5" cy="45.0"/><circle cx="265.5" cy="70.0"/><circle cx="289.6" cy="82.0"/><circle cx="289.6" cy="92.2"/><circle cx="323.0" cy="76.4"/><circle cx="273.3" cy="100.0"/><circle cx="284.4" cy="106.0"/><circle cx="331.6" cy="101.2"/><circle cx="337.6" cy="113.2"/><circle cx="271.0" cy="117.0"/><circle cx="298.5" cy="127.0"/><circle cx="310.2" cy="125.4"/><circle cx="321.3" cy="123.0"/><circle cx="305.4" cy="134.3"/><circle cx="323.9" cy="139.4"/><circle cx="278.4" cy="141.2"/><circle cx="304.2" cy="149.2"/><circle cx="291.3" cy="152.0"/><circle cx="261.2" cy="145.0"/><circle cx="257.0" cy="149.2"/><circle cx="334.2" cy="156.6"/><circle cx="245.8" cy="155.4"/><circle cx="251.0" cy="154.0"/><circle cx="242.4" cy="155.0"/><circle cx="248.4" cy="76.8"/><circle cx="256.0" cy="79.4"/><circle cx="250.6" cy="68.2"/><circle cx="242.0" cy="61.3"/><circle cx="231.2" cy="52.4"/><circle cx="224.3" cy="63.0"/><circle cx="245.4" cy="89.7"/><circle cx="249.6" cy="108.2"/><circle cx="244.0" cy="97.4"/><circle cx="244.6" cy="130.0"/><circle cx="240.6" cy="142.0"/><circle cx="257.0" cy="99.0"/><circle cx="89.3" cy="41.0"/><circle cx="95.0" cy="53.0"/><circle cx="101.0" cy="53.6"/><circle cx="89.8" cy="64.0"/><circle cx="77.0" cy="70.0"/><circle cx="80.3" cy="73.4"/><circle cx="71.4" cy="83.7"/><circle cx="78.6" cy="85.4"/><circle cx="79.5" cy="96.5"/><circle cx="76.5" cy="106.0"/><circle cx="77.2" cy="112.0"/><circle cx="68.0" cy="122.0"/><circle cx="76.0" cy="120.6"/><circle cx="62.3" cy="141.2"/><circle cx="68.3" cy="140.3"/><circle cx="61.8" cy="150.6"/><circle cx="70.0" cy="149.7"/><circle cx="66.6" cy="151.0"/><circle cx="85.5" cy="116.3"/><circle cx="83.8" cy="128.3"/></g>
<path d="M48.8,163 V32.4 H358.7 V163" fill="none" stroke="#000" stroke-width="1.1"/>
<g font-family="Liberation Sans, sans-serif" fill="#000"><path d="M48.8,65.2h-4.9" stroke="#000" stroke-width="1.1"/><text x="37.9" y="70.1" text-anchor="end" font-size="13.9" textLength="8.1" lengthAdjust="spacingAndGlyphs">2</text><path d="M48.8,123.2h-4.9" stroke="#000" stroke-width="1.1"/><text x="37.9" y="128.1" text-anchor="end" font-size="13.9" textLength="8.1" lengthAdjust="spacingAndGlyphs">1</text><text x="203.4" y="23.8" text-anchor="middle" font-size="17.4" textLength="185.3" lengthAdjust="spacingAndGlyphs">PRICE vs FLOOR_AREA</text><text x="49.5" y="27.7" text-anchor="start" font-size="13.9" textLength="24.1" lengthAdjust="spacingAndGlyphs">1e6</text><g transform="translate(21,111.29999999999995) rotate(-90)"><text x="0.0" y="0.0" text-anchor="middle" font-size="13.9" textLength="37.3" lengthAdjust="spacingAndGlyphs">PRICE</text></g></g>
</svg>
<div class="abs" style="left:1868px;top:319px;width:8px;height:402px;border-radius:4px 4px 0 0;background:#5a5b5d"></div>
<!-- outer band below panel -->
<div class="abs" style="left:0;top:720px;width:1913px;height:15px;background:transparent"></div>
<div id="status" class="abs">
 <svg class="abs" style="left:0;top:0" width="240" height="34" viewBox="0 735 240 34" fill="none" stroke="#e3e3e3" stroke-width="2">
  <path transform="translate(24.2,742.9) scale(0.87,0.82)" fill="#e3e3e3" stroke="#e3e3e3" stroke-width="0.45" d="M4 7v2c0 .55-.45 1-1 1H2v4h1c.55 0 1 .45 1 1v2c0 1.65 1.35 3 3 3h3v-2H7c-.55 0-1-.45-1-1v-2c0-1.3-.84-2.42-2-2.83v-.34C5.160 11.42 6 10.3 6 9V7c0-.55.45-1 1-1h3V4H7C5.35 4 4 5.350 4 7zm17 3c-.55 0-1-.45-1-1V7c0-1.65-1.35-3-3-3h-3v2h3c.55 0 1 .45 1 1v2c0 1.3.84 2.42 2 2.83v.34c-1.16.41-2 1.52-2 2.83v2c0 .55-.45 1-1 1h-3v2h3c1.65 0 3-1.35 3-3v-2c0-.55.45-1 1-1h1v-4h-1z"/>
  <rect x="139.6" y="747" width="15.4" height="11.8" rx="1"/>
  <path d="M142.5,750.5 L145,753 L142.5,755.5" stroke-width="1.6"/><path d="M146.5,756.5 H151.5" stroke-width="1.6"/>
 </svg>
 <div class="abs st" style="left:53.5px;top:10px">Variables</div>
 <div class="abs st" style="left:166.2px;top:10px">Terminal</div>
</div>
<div class="abs" style="left:939.5px;top:726px;width:35px;height:35px;border-radius:50%;background:linear-gradient(45deg,#3270ec 0%,#4389fb 50%,#63a6ff 100%);box-shadow:0 0 3px rgba(0,0,0,.35)"></div>
<svg class="abs" style="left:939.5px;top:726px" width="35" height="35" viewBox="0 0 35 35"><path d="M17.2,9.8 Q18.8,16.4 25.5,18 Q18.8,19.6 17.2,26.2 Q15.6,19.6 8.9,18 Q15.6,16.4 17.2,9.8 Z" fill="#0b3a8a"/></svg>
</body></html>
